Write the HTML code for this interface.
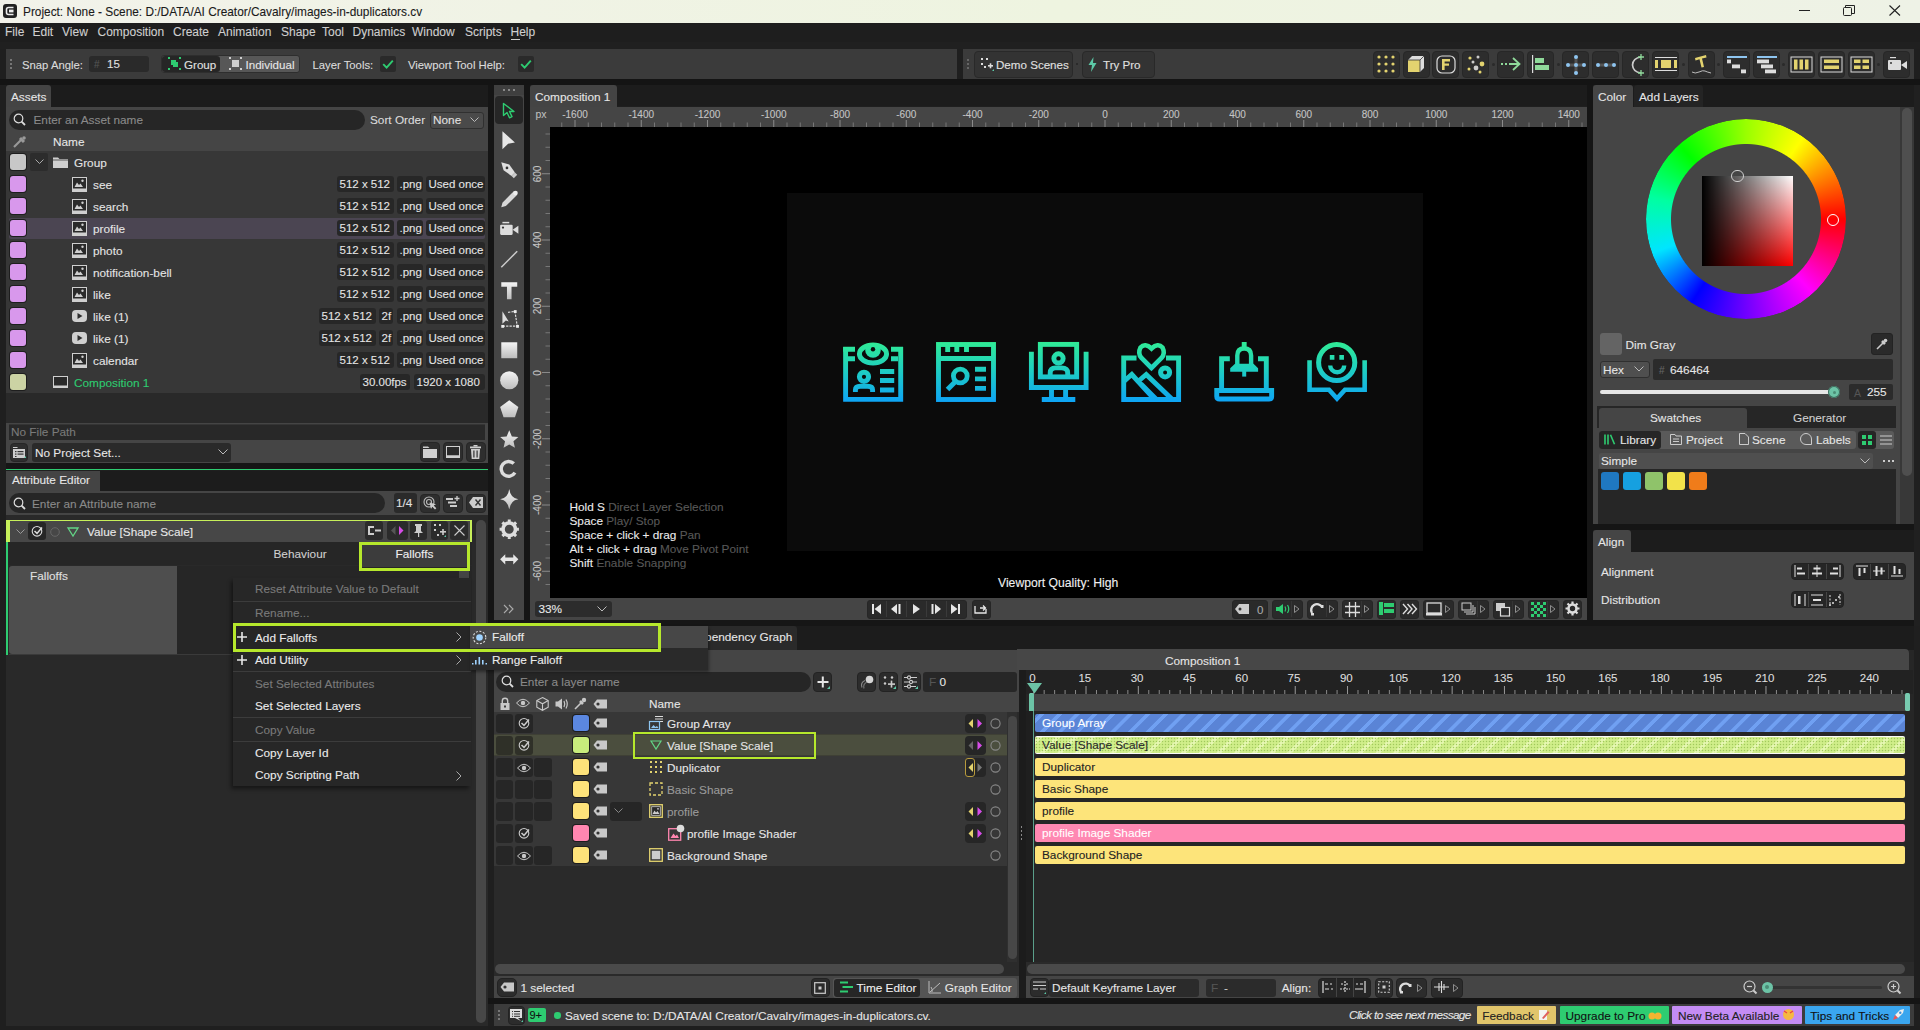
<!DOCTYPE html>
<html><head><meta charset="utf-8">
<style>
*{box-sizing:border-box;margin:0;padding:0}
html,body{width:1920px;height:1030px;overflow:hidden;background:#1f1f1f;font-family:"Liberation Sans",sans-serif;font-size:12px;color:#d8d8d8}
.a{position:absolute}
.t{position:absolute;white-space:nowrap;line-height:1;-webkit-text-stroke:0.1px currentColor}
svg.a{overflow:visible}
</style></head><body>
<div class="a" style="left:0px;top:0px;width:1920px;height:23px;background:linear-gradient(90deg,#f2f2ea 0%,#eef4e0 55%,#eef2e6 100%);"></div><svg class="a" style="left:3px;top:4px;" width="14" height="14" viewBox="0 0 14 14"><rect x="0" y="0" width="14" height="14" rx="3" fill="#222"/><path d="M10.5 3.5H5.5Q3.5 3.5 3.5 5.5V8.5Q3.5 10.5 5.5 10.5H10.5" stroke="#eee" stroke-width="1.6" fill="none"/><rect x="6" y="5.6" width="4.5" height="2.8" fill="#eee"/></svg><div class="t" style="left:23px;top:6.57px;font-size:11.85px;color:#1a1a1a;">Project: None - Scene: D:/DATA/AI Creator/Cavalry/images-in-duplicators.cv</div><div class="a" style="left:1799px;top:10px;width:11px;height:1px;background:#222;"></div><svg class="a" style="left:1843px;top:5px;" width="12" height="11" viewBox="0 0 12 11"><rect x="0.5" y="2.5" width="8" height="8" rx="1" fill="none" stroke="#222"/><path d="M2.5 2.5V0.5H11.5V8.5H8.5" fill="none" stroke="#222"/></svg><svg class="a" style="left:1889px;top:5px;" width="12" height="11" viewBox="0 0 12 11"><path d="M0.5 0.5L11 10.5M11 0.5L0.5 10.5" stroke="#222" stroke-width="1.1"/></svg><div class="a" style="left:0px;top:23px;width:1920px;height:19px;background:#1e1e1e;"></div><div class="a" style="left:0px;top:42px;width:1920px;height:7px;background:#202020;"></div><div class="t" style="left:5px;top:26.34px;font-size:12px;color:#cfcfcf;">File</div><div class="t" style="left:32.5px;top:26.34px;font-size:12px;color:#cfcfcf;">Edit</div><div class="t" style="left:62px;top:26.34px;font-size:12px;color:#cfcfcf;">View</div><div class="t" style="left:97.5px;top:26.34px;font-size:12px;color:#cfcfcf;">Composition</div><div class="t" style="left:173px;top:26.34px;font-size:12px;color:#cfcfcf;">Create</div><div class="t" style="left:218px;top:26.34px;font-size:12px;color:#cfcfcf;">Animation</div><div class="t" style="left:281px;top:26.34px;font-size:12px;color:#cfcfcf;">Shape</div><div class="t" style="left:322px;top:26.34px;font-size:12px;color:#cfcfcf;">Tool</div><div class="t" style="left:352.5px;top:26.34px;font-size:12px;color:#cfcfcf;">Dynamics</div><div class="t" style="left:412px;top:26.34px;font-size:12px;color:#cfcfcf;">Window</div><div class="t" style="left:465px;top:26.34px;font-size:12px;color:#cfcfcf;">Scripts</div><div class="t" style="left:510.5px;top:26.34px;font-size:12px;color:#cfcfcf;">Help</div><div class="a" style="left:511px;top:39px;width:9px;height:1px;background:#cfcfcf;"></div><div class="a" style="left:6px;top:49px;width:951px;height:30px;background:#3b3b3b;"></div><div class="a" style="left:10px;top:59px;width:2px;height:2px;background:#777;"></div><div class="a" style="left:10px;top:63px;width:2px;height:2px;background:#777;"></div><div class="a" style="left:10px;top:67px;width:2px;height:2px;background:#777;"></div><div class="t" style="left:22px;top:60.03px;font-size:11.3px;color:#dcdcdc;">Snap Angle:</div><div class="a" style="left:89px;top:56px;width:60px;height:16px;background:#2a2a2a;border-radius:3px"></div><div class="t" style="left:94px;top:60.13px;font-size:10px;color:#555;">#</div><div class="t" style="left:107px;top:59.37px;font-size:11.5px;color:#e0e0e0;">15</div><div class="a" style="left:161px;top:55px;width:139px;height:18px;background:#575757;border-radius:3px;border:1px solid #2e2e2e"></div><div class="a" style="left:162px;top:56px;width:58px;height:16px;background:#262626;border-radius:3px"></div><svg class="a" style="left:168px;top:57px;" width="13" height="13" viewBox="0 0 13 13"><rect x="3" y="3" width="5" height="5" fill="#2ecc71"/><rect x="5" y="5" width="5" height="5" fill="#2ecc71"/><g fill="#2ecc71"><rect x="0" y="0" width="2" height="2"/><rect x="11" y="0" width="2" height="2"/><rect x="0" y="11" width="2" height="2"/><rect x="11" y="11" width="2" height="2"/></g></svg><div class="t" style="left:184px;top:59.08px;font-size:11.6px;color:#e0e0e0;">Group</div><svg class="a" style="left:229px;top:57px;" width="13" height="13" viewBox="0 0 13 13"><rect x="3" y="3" width="7" height="7" fill="#cfcfcf"/><g fill="#cfcfcf"><rect x="0" y="0" width="2" height="2"/><rect x="11" y="0" width="2" height="2"/><rect x="0" y="11" width="2" height="2"/><rect x="11" y="11" width="2" height="2"/></g></svg><div class="t" style="left:245.5px;top:59.08px;font-size:11.6px;color:#e6e6e6;">Individual</div><div class="t" style="left:312.5px;top:60.03px;font-size:11.3px;color:#dcdcdc;">Layer Tools:</div><svg class="a" style="left:380px;top:56px;" width="16" height="16" viewBox="0 0 16 16"><rect width="16" height="16" rx="2" fill="#2a2a2a"/><path d="M3.2 8.2L6.6 11.6L12.8 4.6" stroke="#2ecc71" stroke-width="1.9" fill="none"/></svg><div class="t" style="left:408px;top:60.03px;font-size:11.3px;color:#dcdcdc;">Viewport Tool Help:</div><svg class="a" style="left:518px;top:56px;" width="16" height="16" viewBox="0 0 16 16"><rect width="16" height="16" rx="2" fill="#2a2a2a"/><path d="M3.2 8.2L6.6 11.6L12.8 4.6" stroke="#2ecc71" stroke-width="1.9" fill="none"/></svg><div class="a" style="left:963px;top:49px;width:951px;height:30px;background:#3b3b3b;"></div><div class="a" style="left:967px;top:59px;width:2px;height:2px;background:#666;"></div><div class="a" style="left:967px;top:63px;width:2px;height:2px;background:#666;"></div><div class="a" style="left:967px;top:67px;width:2px;height:2px;background:#666;"></div><div class="a" style="left:974px;top:51px;width:99px;height:27px;background:#333;border:1px solid #292929;border-radius:4px"></div><svg class="a" style="left:980px;top:57px;" width="14" height="15" viewBox="0 0 14 15"><g fill="#ddd"><rect x="1" y="1" width="2" height="2"/><rect x="6" y="1" width="2" height="2"/><rect x="1" y="6" width="2" height="2"/><rect x="8" y="8" width="5" height="1.6"/><rect x="9.7" y="6.3" width="1.6" height="5"/><rect x="4" y="9" width="2" height="2"/></g><path d="M12 14h2v-2z" fill="#5cc9a7"/></svg><div class="t" style="left:996px;top:58.78px;font-size:11.6px;color:#e0e0e0;">Demo Scenes</div><div class="a" style="left:1076px;top:63px;width:2px;height:2px;background:#2a2a2a;"></div><div class="a" style="left:1082px;top:51px;width:73px;height:27px;background:#333;border:1px solid #292929;border-radius:4px"></div><svg class="a" style="left:1088px;top:57px;" width="9" height="15" viewBox="0 0 9 15"><path d="M5.5 0L0.5 8H4L3 15L8.5 6H5Z" fill="#5cc9a7"/></svg><div class="t" style="left:1103px;top:58.78px;font-size:11.6px;color:#e0e0e0;">Try Pro</div><div class="a" style="left:1372.5px;top:51px;width:27px;height:27px;background:#2d2d2d;border:1px solid #272727;border-radius:4px"></div><div class="a" style="left:1402.5px;top:51px;width:27px;height:27px;background:#2d2d2d;border:1px solid #272727;border-radius:4px"></div><div class="a" style="left:1432px;top:51px;width:27px;height:27px;background:#2d2d2d;border:1px solid #272727;border-radius:4px"></div><div class="a" style="left:1462px;top:51px;width:27px;height:27px;background:#2d2d2d;border:1px solid #272727;border-radius:4px"></div><div class="a" style="left:1497px;top:51px;width:27px;height:27px;background:#2d2d2d;border:1px solid #272727;border-radius:4px"></div><div class="a" style="left:1527px;top:51px;width:27px;height:27px;background:#2d2d2d;border:1px solid #272727;border-radius:4px"></div><div class="a" style="left:1562px;top:51px;width:27px;height:27px;background:#2d2d2d;border:1px solid #272727;border-radius:4px"></div><div class="a" style="left:1592px;top:51px;width:27px;height:27px;background:#2d2d2d;border:1px solid #272727;border-radius:4px"></div><div class="a" style="left:1622px;top:51px;width:27px;height:27px;background:#2d2d2d;border:1px solid #272727;border-radius:4px"></div><div class="a" style="left:1652px;top:51px;width:27px;height:27px;background:#2d2d2d;border:1px solid #272727;border-radius:4px"></div><div class="a" style="left:1687.5px;top:51px;width:27px;height:27px;background:#2d2d2d;border:1px solid #272727;border-radius:4px"></div><div class="a" style="left:1722.5px;top:51px;width:27px;height:27px;background:#2d2d2d;border:1px solid #272727;border-radius:4px"></div><div class="a" style="left:1752.5px;top:51px;width:27px;height:27px;background:#2d2d2d;border:1px solid #272727;border-radius:4px"></div><div class="a" style="left:1787.5px;top:51px;width:27px;height:27px;background:#2d2d2d;border:1px solid #272727;border-radius:4px"></div><div class="a" style="left:1817.5px;top:51px;width:27px;height:27px;background:#2d2d2d;border:1px solid #272727;border-radius:4px"></div><div class="a" style="left:1847.5px;top:51px;width:27px;height:27px;background:#2d2d2d;border:1px solid #272727;border-radius:4px"></div><div class="a" style="left:1883px;top:51px;width:27px;height:27px;background:#2d2d2d;border:1px solid #272727;border-radius:4px"></div><div class="a" style="left:1492px;top:63px;width:3px;height:3px;background:#2a2a2a;border-radius:2px"></div><div class="a" style="left:1557px;top:63px;width:3px;height:3px;background:#2a2a2a;border-radius:2px"></div><div class="a" style="left:1682px;top:63px;width:3px;height:3px;background:#2a2a2a;border-radius:2px"></div><div class="a" style="left:1717px;top:63px;width:3px;height:3px;background:#2a2a2a;border-radius:2px"></div><div class="a" style="left:1782px;top:63px;width:3px;height:3px;background:#2a2a2a;border-radius:2px"></div><div class="a" style="left:1877px;top:63px;width:3px;height:3px;background:#2a2a2a;border-radius:2px"></div><svg class="a" style="left:1376px;top:53.5px;" width="20" height="20" viewBox="0 0 20 20"><circle cx="3" cy="3" r="1.6" fill="#e3d36f"/><circle cx="3" cy="10" r="1.6" fill="#e3d36f"/><circle cx="3" cy="17" r="1.6" fill="#e3d36f"/><circle cx="10" cy="3" r="1.6" fill="#e3d36f"/><circle cx="10" cy="10" r="1.6" fill="#e3d36f"/><circle cx="10" cy="17" r="1.6" fill="#e3d36f"/><circle cx="17" cy="3" r="1.6" fill="#e3d36f"/><circle cx="17" cy="10" r="1.6" fill="#e3d36f"/><circle cx="17" cy="17" r="1.6" fill="#e3d36f"/></svg><svg class="a" style="left:1406px;top:53.5px;" width="20" height="20" viewBox="0 0 20 20"><path d="M2 6L6 2H18V14L14 18Z" fill="#ddd"/><rect x="2" y="6" width="12" height="12" fill="#e3d36f"/><path d="M2 6H14V18M14 6L18 2" stroke="#333" stroke-width="0.8" fill="none"/></svg><svg class="a" style="left:1436px;top:53.5px;" width="20" height="20" viewBox="0 0 20 20"><rect x="1" y="2" width="18" height="17" rx="5" fill="none" stroke="#ddd" stroke-width="1.2"/><rect x="6" y="5" width="2.6" height="11" fill="#e3d36f"/><rect x="6" y="5" width="8" height="2.5" fill="#e3d36f"/><rect x="8" y="9.5" width="5" height="2.2" fill="#e3d36f"/></svg><svg class="a" style="left:1466px;top:53.5px;" width="20" height="20" viewBox="0 0 20 20"><circle cx="4" cy="4" r="1.6" fill="#e3d36f"/><circle cx="12" cy="3" r="1.5" fill="#ccc"/><circle cx="7" cy="8" r="1.5" fill="#ccc"/><circle cx="16" cy="10" r="2.4" fill="#e3d36f"/><circle cx="10" cy="14" r="2.4" fill="#ccc"/><circle cx="3" cy="15" r="1.5" fill="#e3d36f"/><circle cx="14" cy="18" r="1.5" fill="#e3d36f"/></svg><svg class="a" style="left:1500px;top:53.5px;" width="22" height="20" viewBox="0 0 22 20"><path d="M1 10H3M5 10H7M9 10H19" stroke="#8fd99a" stroke-width="1.8"/><path d="M13 4L19.5 10L13 16" stroke="#8fd99a" stroke-width="1.8" fill="none"/></svg><svg class="a" style="left:1531px;top:53.5px;" width="20" height="20" viewBox="0 0 20 20"><rect x="1" y="1" width="1.2" height="18" fill="#ddd"/><rect x="4" y="4" width="9" height="5" fill="#8fd99a"/><rect x="4" y="11" width="14" height="5" fill="#8fd99a"/></svg><svg class="a" style="left:1565px;top:53.5px;" width="22" height="22" viewBox="0 0 22 22"><rect x="9.5" y="3" width="3" height="16" fill="#555"/><rect x="3" y="9.5" width="16" height="3" fill="#555"/><circle cx="11" cy="3" r="2" fill="#8ec5f0"/><circle cx="11" cy="11" r="2" fill="#8ec5f0"/><circle cx="11" cy="19" r="2" fill="#8ec5f0"/><circle cx="3" cy="11" r="2" fill="#8ec5f0"/><circle cx="19" cy="11" r="2" fill="#8ec5f0"/></svg><svg class="a" style="left:1595px;top:53.5px;" width="22" height="22" viewBox="0 0 22 22"><rect x="3" y="9.5" width="16" height="3" fill="#555"/><circle cx="3" cy="11" r="2" fill="#8ec5f0"/><circle cx="11" cy="11" r="2" fill="#8ec5f0"/><circle cx="19" cy="11" r="2" fill="#8ec5f0"/></svg><svg class="a" style="left:1626px;top:53.5px;" width="20" height="22" viewBox="0 0 20 22"><path d="M15 3Q7 4 6.5 11Q7 18 15 19" stroke="#ccc" stroke-width="1.7" fill="none"/><path d="M15 0V6M12 3H18M15 16V22M12 19H18" stroke="#8fd99a" stroke-width="1.3"/></svg><svg class="a" style="left:1655px;top:54.5px;" width="22" height="18" viewBox="0 0 22 18"><rect x="0" y="2" width="22" height="1" fill="#ddd"/><rect x="0" y="15" width="22" height="1" fill="#ddd"/><rect x="0" y="5" width="3" height="8" fill="#e3d36f"/><rect x="6" y="5" width="10" height="8" fill="#e3d36f"/><rect x="19" y="5" width="3" height="8" fill="#e3d36f"/></svg><svg class="a" style="left:1691px;top:52.5px;" width="22" height="22" viewBox="0 0 22 22"><path d="M4 5L15 2L15.5 4.5L11 5.6L13 14L10.5 14.5L8.5 6.3L4.5 7.5Z" fill="#e3d36f"/><path d="M1 19Q4 21 8 19T14 18T20 20" stroke="#ccc" stroke-width="0.9" fill="none"/></svg><svg class="a" style="left:1726px;top:53.5px;" width="22" height="22" viewBox="0 0 22 22"><rect x="1" y="2" width="20" height="2" fill="#8ec5f0"/><rect x="1" y="5.5" width="4" height="3.8" fill="#ddd"/><rect x="6" y="10.5" width="8" height="3.8" fill="#ddd"/><rect x="15" y="15.5" width="5" height="3.8" fill="#ddd"/></svg><svg class="a" style="left:1756px;top:53.5px;" width="22" height="22" viewBox="0 0 22 22"><rect x="1" y="2" width="20" height="2" fill="#8ec5f0"/><rect x="1" y="5.5" width="12" height="3.8" fill="#ddd"/><rect x="5" y="10.5" width="12" height="3.8" fill="#ddd"/><rect x="9" y="15.5" width="11" height="3.8" fill="#ddd"/></svg><svg class="a" style="left:1790px;top:53.5px;" width="22" height="20" viewBox="0 0 22 20"><rect x="1" y="3" width="21" height="15" fill="none" stroke="#ddd" stroke-width="1"/><rect x="4" y="5.5" width="3.5" height="10" fill="#e3d36f"/><rect x="9.5" y="5.5" width="3.5" height="10" fill="#e3d36f"/><rect x="15" y="5.5" width="3.5" height="10" fill="#e3d36f"/></svg><svg class="a" style="left:1820px;top:53.5px;" width="22" height="20" viewBox="0 0 22 20"><rect x="1" y="3" width="21" height="15" fill="none" stroke="#ddd" stroke-width="1"/><rect x="4" y="5.5" width="15" height="3.5" fill="#e3d36f"/><rect x="4" y="11.5" width="15" height="3.5" fill="#e3d36f"/></svg><svg class="a" style="left:1850px;top:53.5px;" width="22" height="20" viewBox="0 0 22 20"><rect x="1" y="3" width="21" height="15" fill="none" stroke="#ddd" stroke-width="1"/><rect x="4" y="5.5" width="6.5" height="3.5" fill="#e3d36f"/><rect x="12.5" y="5.5" width="6.5" height="3.5" fill="#e3d36f"/><rect x="4" y="11.5" width="6.5" height="3.5" fill="#e3d36f"/><rect x="12.5" y="11.5" width="6.5" height="3.5" fill="#e3d36f"/></svg><svg class="a" style="left:1886px;top:53.5px;" width="22" height="20" viewBox="0 0 22 20"><rect x="2" y="6" width="13" height="10" rx="1" fill="#ddd"/><path d="M15 11L21 7V15Z" fill="#ddd"/><rect x="4" y="3" width="6" height="1.2" fill="#ddd"/><circle cx="5" cy="9" r="1" fill="#333"/></svg><div class="a" style="left:0px;top:79px;width:1920px;height:6px;background:#141414;"></div>
<div class="a" style="left:6px;top:85px;width:482px;height:22px;background:#1c1c1c;"></div><div class="a" style="left:6px;top:85px;width:45px;height:22px;background:#444;border-radius:3px 3px 0 0"></div><div class="t" style="left:11px;top:91.61px;font-size:11.8px;color:#e6e6e6;">Assets</div><div class="a" style="left:6px;top:107px;width:482px;height:44px;background:#454545;"></div><div class="a" style="left:9px;top:110px;width:356px;height:20px;background:#262626;border-radius:10px"></div><svg class="a" style="left:13px;top:113px;" width="13" height="13" viewBox="0 0 13 13"><circle cx="5.5" cy="5.5" r="4.3" stroke="#ddd" stroke-width="1.2" fill="none"/><path d="M8.6 8.6L12 12" stroke="#ddd" stroke-width="1.8"/></svg><div class="t" style="left:33.5px;top:115.11px;font-size:11.8px;color:#8a8a8a;">Enter an Asset name</div><div class="t" style="left:370px;top:115.11px;font-size:11.8px;color:#dcdcdc;">Sort Order</div><div class="a" style="left:430px;top:112px;width:54px;height:17px;background:#4a4a4a;border-radius:3px;border:1px solid #303030"></div><div class="t" style="left:433px;top:115.11px;font-size:11.8px;color:#e0e0e0;">None</div><svg class="a" style="left:470px;top:117px;" width="9" height="6" viewBox="0 0 9 6"><path d="M0.5 0.5L4.5 4.5L8.5 0.5" stroke="#bbb" fill="none"/></svg><svg class="a" style="left:13px;top:136px;" width="13" height="12" viewBox="0 0 13 12"><path d="M1 11L8 4" stroke="#999" stroke-width="2.2"/><path d="M7 2L11 6" stroke="#999" stroke-width="3"/><circle cx="11" cy="2" r="1.8" fill="#999"/></svg><div class="t" style="left:53px;top:136.61px;font-size:11.8px;color:#e6e6e6;">Name</div><div class="a" style="left:6px;top:151px;width:482px;height:242px;background:#373737;"></div><div class="a" style="left:9px;top:217.5px;width:476px;height:21px;background:#4b4552;border-radius:2px"></div><div class="a" style="left:10px;top:154px;width:16px;height:16px;background:#c8c8c8;border-radius:3px;box-shadow:0 0 0 1px #1e1e1e"></div><div class="a" style="left:30px;top:153px;width:18px;height:18px;background:#2c2c2c;border-radius:2px"></div><svg class="a" style="left:35px;top:159px;" width="9" height="6" viewBox="0 0 9 6"><path d="M0.5 0.5L4.5 4.5L8.5 0.5" stroke="#aaa" fill="none"/></svg><svg class="a" style="left:53px;top:156px;" width="15" height="12" viewBox="0 0 15 12"><path d="M0 1.5H5L6.5 3H15V12H0Z" fill="#cfcfcf"/><rect x="0" y="3.6" width="15" height="0.8" fill="#3a3a3a"/></svg><div class="t" style="left:74px;top:157.61px;font-size:11.8px;color:#e4e4e4;">Group</div><div class="a" style="left:10px;top:176px;width:16px;height:16px;background:#d898ec;border-radius:3px;box-shadow:0 0 0 1px #1e1e1e"></div><svg class="a" style="left:72px;top:177px;" width="15" height="15" viewBox="0 0 15 15"><rect x="0.5" y="0.5" width="14" height="14" fill="#2a2a2a" stroke="#cfcfcf"/><rect x="0" y="11.5" width="15" height="3.5" fill="#cfcfcf"/><path d="M2.5 10L5 5.5L7 8L8.5 6.5L11 10Z" fill="#cfcfcf"/><circle cx="10.5" cy="3.7" r="1.2" fill="#cfcfcf"/></svg><div class="t" style="left:93px;top:179.61px;font-size:11.8px;color:#e4e4e4;">see</div><div class="a" style="left:337px;top:176px;width:57px;height:16px;background:#272727;border-radius:3px"></div><div class="t" style="left:339.5px;top:178.87px;font-size:11.5px;color:#e4e4e4;">512 x 512</div><div class="a" style="left:397px;top:176px;width:26px;height:16px;background:#272727;border-radius:3px"></div><div class="t" style="left:399.5px;top:178.87px;font-size:11.5px;color:#e4e4e4;">.png</div><div class="a" style="left:426px;top:176px;width:59px;height:16px;background:#272727;border-radius:3px"></div><div class="t" style="left:428.5px;top:178.87px;font-size:11.5px;color:#e4e4e4;">Used once</div><div class="a" style="left:10px;top:198px;width:16px;height:16px;background:#d898ec;border-radius:3px;box-shadow:0 0 0 1px #1e1e1e"></div><svg class="a" style="left:72px;top:199px;" width="15" height="15" viewBox="0 0 15 15"><rect x="0.5" y="0.5" width="14" height="14" fill="#2a2a2a" stroke="#cfcfcf"/><rect x="0" y="11.5" width="15" height="3.5" fill="#cfcfcf"/><path d="M2.5 10L5 5.5L7 8L8.5 6.5L11 10Z" fill="#cfcfcf"/><circle cx="10.5" cy="3.7" r="1.2" fill="#cfcfcf"/></svg><div class="t" style="left:93px;top:201.61px;font-size:11.8px;color:#e4e4e4;">search</div><div class="a" style="left:337px;top:198px;width:57px;height:16px;background:#272727;border-radius:3px"></div><div class="t" style="left:339.5px;top:200.87px;font-size:11.5px;color:#e4e4e4;">512 x 512</div><div class="a" style="left:397px;top:198px;width:26px;height:16px;background:#272727;border-radius:3px"></div><div class="t" style="left:399.5px;top:200.87px;font-size:11.5px;color:#e4e4e4;">.png</div><div class="a" style="left:426px;top:198px;width:59px;height:16px;background:#272727;border-radius:3px"></div><div class="t" style="left:428.5px;top:200.87px;font-size:11.5px;color:#e4e4e4;">Used once</div><div class="a" style="left:10px;top:220px;width:16px;height:16px;background:#d898ec;border-radius:3px;box-shadow:0 0 0 1px #1e1e1e"></div><svg class="a" style="left:72px;top:221px;" width="15" height="15" viewBox="0 0 15 15"><rect x="0.5" y="0.5" width="14" height="14" fill="#2a2a2a" stroke="#cfcfcf"/><rect x="0" y="11.5" width="15" height="3.5" fill="#cfcfcf"/><path d="M2.5 10L5 5.5L7 8L8.5 6.5L11 10Z" fill="#cfcfcf"/><circle cx="10.5" cy="3.7" r="1.2" fill="#cfcfcf"/></svg><div class="t" style="left:93px;top:223.61px;font-size:11.8px;color:#e4e4e4;">profile</div><div class="a" style="left:337px;top:220px;width:57px;height:16px;background:#272727;border-radius:3px"></div><div class="t" style="left:339.5px;top:222.87px;font-size:11.5px;color:#e4e4e4;">512 x 512</div><div class="a" style="left:397px;top:220px;width:26px;height:16px;background:#272727;border-radius:3px"></div><div class="t" style="left:399.5px;top:222.87px;font-size:11.5px;color:#e4e4e4;">.png</div><div class="a" style="left:426px;top:220px;width:59px;height:16px;background:#272727;border-radius:3px"></div><div class="t" style="left:428.5px;top:222.87px;font-size:11.5px;color:#e4e4e4;">Used once</div><div class="a" style="left:10px;top:242px;width:16px;height:16px;background:#d898ec;border-radius:3px;box-shadow:0 0 0 1px #1e1e1e"></div><svg class="a" style="left:72px;top:243px;" width="15" height="15" viewBox="0 0 15 15"><rect x="0.5" y="0.5" width="14" height="14" fill="#2a2a2a" stroke="#cfcfcf"/><rect x="0" y="11.5" width="15" height="3.5" fill="#cfcfcf"/><path d="M2.5 10L5 5.5L7 8L8.5 6.5L11 10Z" fill="#cfcfcf"/><circle cx="10.5" cy="3.7" r="1.2" fill="#cfcfcf"/></svg><div class="t" style="left:93px;top:245.61px;font-size:11.8px;color:#e4e4e4;">photo</div><div class="a" style="left:337px;top:242px;width:57px;height:16px;background:#272727;border-radius:3px"></div><div class="t" style="left:339.5px;top:244.87px;font-size:11.5px;color:#e4e4e4;">512 x 512</div><div class="a" style="left:397px;top:242px;width:26px;height:16px;background:#272727;border-radius:3px"></div><div class="t" style="left:399.5px;top:244.87px;font-size:11.5px;color:#e4e4e4;">.png</div><div class="a" style="left:426px;top:242px;width:59px;height:16px;background:#272727;border-radius:3px"></div><div class="t" style="left:428.5px;top:244.87px;font-size:11.5px;color:#e4e4e4;">Used once</div><div class="a" style="left:10px;top:264px;width:16px;height:16px;background:#d898ec;border-radius:3px;box-shadow:0 0 0 1px #1e1e1e"></div><svg class="a" style="left:72px;top:265px;" width="15" height="15" viewBox="0 0 15 15"><rect x="0.5" y="0.5" width="14" height="14" fill="#2a2a2a" stroke="#cfcfcf"/><rect x="0" y="11.5" width="15" height="3.5" fill="#cfcfcf"/><path d="M2.5 10L5 5.5L7 8L8.5 6.5L11 10Z" fill="#cfcfcf"/><circle cx="10.5" cy="3.7" r="1.2" fill="#cfcfcf"/></svg><div class="t" style="left:93px;top:267.61px;font-size:11.8px;color:#e4e4e4;">notification-bell</div><div class="a" style="left:337px;top:264px;width:57px;height:16px;background:#272727;border-radius:3px"></div><div class="t" style="left:339.5px;top:266.87px;font-size:11.5px;color:#e4e4e4;">512 x 512</div><div class="a" style="left:397px;top:264px;width:26px;height:16px;background:#272727;border-radius:3px"></div><div class="t" style="left:399.5px;top:266.87px;font-size:11.5px;color:#e4e4e4;">.png</div><div class="a" style="left:426px;top:264px;width:59px;height:16px;background:#272727;border-radius:3px"></div><div class="t" style="left:428.5px;top:266.87px;font-size:11.5px;color:#e4e4e4;">Used once</div><div class="a" style="left:10px;top:286px;width:16px;height:16px;background:#d898ec;border-radius:3px;box-shadow:0 0 0 1px #1e1e1e"></div><svg class="a" style="left:72px;top:287px;" width="15" height="15" viewBox="0 0 15 15"><rect x="0.5" y="0.5" width="14" height="14" fill="#2a2a2a" stroke="#cfcfcf"/><rect x="0" y="11.5" width="15" height="3.5" fill="#cfcfcf"/><path d="M2.5 10L5 5.5L7 8L8.5 6.5L11 10Z" fill="#cfcfcf"/><circle cx="10.5" cy="3.7" r="1.2" fill="#cfcfcf"/></svg><div class="t" style="left:93px;top:289.61px;font-size:11.8px;color:#e4e4e4;">like</div><div class="a" style="left:337px;top:286px;width:57px;height:16px;background:#272727;border-radius:3px"></div><div class="t" style="left:339.5px;top:288.87px;font-size:11.5px;color:#e4e4e4;">512 x 512</div><div class="a" style="left:397px;top:286px;width:26px;height:16px;background:#272727;border-radius:3px"></div><div class="t" style="left:399.5px;top:288.87px;font-size:11.5px;color:#e4e4e4;">.png</div><div class="a" style="left:426px;top:286px;width:59px;height:16px;background:#272727;border-radius:3px"></div><div class="t" style="left:428.5px;top:288.87px;font-size:11.5px;color:#e4e4e4;">Used once</div><div class="a" style="left:10px;top:308px;width:16px;height:16px;background:#d898ec;border-radius:3px;box-shadow:0 0 0 1px #1e1e1e"></div><svg class="a" style="left:72px;top:309px;" width="15" height="14" viewBox="0 0 15 14"><rect x="0" y="1" width="15" height="12" rx="4" fill="#cfcfcf"/><path d="M5.5 4L10.5 7L5.5 10Z" fill="#2e2e2e"/></svg><div class="t" style="left:93px;top:311.61px;font-size:11.8px;color:#e4e4e4;">like (1)</div><div class="a" style="left:319px;top:308px;width:56.5px;height:16px;background:#272727;border-radius:3px"></div><div class="t" style="left:321.5px;top:310.87px;font-size:11.5px;color:#e4e4e4;">512 x 512</div><div class="a" style="left:379px;top:308px;width:14px;height:16px;background:#272727;border-radius:3px"></div><div class="t" style="left:381.5px;top:310.87px;font-size:11.5px;color:#e4e4e4;">2f</div><div class="a" style="left:397px;top:308px;width:26px;height:16px;background:#272727;border-radius:3px"></div><div class="t" style="left:399.5px;top:310.87px;font-size:11.5px;color:#e4e4e4;">.png</div><div class="a" style="left:426px;top:308px;width:59px;height:16px;background:#272727;border-radius:3px"></div><div class="t" style="left:428.5px;top:310.87px;font-size:11.5px;color:#e4e4e4;">Used once</div><div class="a" style="left:10px;top:330px;width:16px;height:16px;background:#d898ec;border-radius:3px;box-shadow:0 0 0 1px #1e1e1e"></div><svg class="a" style="left:72px;top:331px;" width="15" height="14" viewBox="0 0 15 14"><rect x="0" y="1" width="15" height="12" rx="4" fill="#cfcfcf"/><path d="M5.5 4L10.5 7L5.5 10Z" fill="#2e2e2e"/></svg><div class="t" style="left:93px;top:333.61px;font-size:11.8px;color:#e4e4e4;">like (1)</div><div class="a" style="left:319px;top:330px;width:56.5px;height:16px;background:#272727;border-radius:3px"></div><div class="t" style="left:321.5px;top:332.87px;font-size:11.5px;color:#e4e4e4;">512 x 512</div><div class="a" style="left:379px;top:330px;width:14px;height:16px;background:#272727;border-radius:3px"></div><div class="t" style="left:381.5px;top:332.87px;font-size:11.5px;color:#e4e4e4;">2f</div><div class="a" style="left:397px;top:330px;width:26px;height:16px;background:#272727;border-radius:3px"></div><div class="t" style="left:399.5px;top:332.87px;font-size:11.5px;color:#e4e4e4;">.png</div><div class="a" style="left:426px;top:330px;width:59px;height:16px;background:#272727;border-radius:3px"></div><div class="t" style="left:428.5px;top:332.87px;font-size:11.5px;color:#e4e4e4;">Used once</div><div class="a" style="left:10px;top:352px;width:16px;height:16px;background:#d898ec;border-radius:3px;box-shadow:0 0 0 1px #1e1e1e"></div><svg class="a" style="left:72px;top:353px;" width="15" height="15" viewBox="0 0 15 15"><rect x="0.5" y="0.5" width="14" height="14" fill="#2a2a2a" stroke="#cfcfcf"/><rect x="0" y="11.5" width="15" height="3.5" fill="#cfcfcf"/><path d="M2.5 10L5 5.5L7 8L8.5 6.5L11 10Z" fill="#cfcfcf"/><circle cx="10.5" cy="3.7" r="1.2" fill="#cfcfcf"/></svg><div class="t" style="left:93px;top:355.61px;font-size:11.8px;color:#e4e4e4;">calendar</div><div class="a" style="left:337px;top:352px;width:57px;height:16px;background:#272727;border-radius:3px"></div><div class="t" style="left:339.5px;top:354.87px;font-size:11.5px;color:#e4e4e4;">512 x 512</div><div class="a" style="left:397px;top:352px;width:26px;height:16px;background:#272727;border-radius:3px"></div><div class="t" style="left:399.5px;top:354.87px;font-size:11.5px;color:#e4e4e4;">.png</div><div class="a" style="left:426px;top:352px;width:59px;height:16px;background:#272727;border-radius:3px"></div><div class="t" style="left:428.5px;top:354.87px;font-size:11.5px;color:#e4e4e4;">Used once</div><div class="a" style="left:10px;top:374px;width:16px;height:16px;background:#ccd3a4;border-radius:3px;box-shadow:0 0 0 1px #1e1e1e"></div><svg class="a" style="left:53px;top:376px;" width="15" height="13" viewBox="0 0 15 13"><rect x="0.5" y="0.5" width="14" height="10" fill="#2a2a2a" stroke="#cfcfcf"/><rect x="0" y="9.5" width="15" height="2.5" fill="#cfcfcf"/></svg><div class="t" style="left:74px;top:377.61px;font-size:11.8px;color:#2ecc71;">Composition 1</div><div class="a" style="left:360px;top:374px;width:50px;height:16px;background:#272727;border-radius:3px"></div><div class="t" style="left:362.5px;top:376.87px;font-size:11.5px;color:#e4e4e4;">30.00fps</div><div class="a" style="left:414px;top:374px;width:71px;height:16px;background:#272727;border-radius:3px"></div><div class="t" style="left:416.5px;top:376.87px;font-size:11.5px;color:#e4e4e4;">1920 x 1080</div><div class="a" style="left:6px;top:393px;width:482px;height:30px;background:#292929;"></div><div class="a" style="left:6px;top:423px;width:482px;height:40px;background:#454545;"></div><div class="a" style="left:9px;top:423.5px;width:476px;height:16.5px;background:#282828;border-top:1px solid #353535"></div><div class="t" style="left:11px;top:427.11px;font-size:11.8px;color:#7a7a7a;">No File Path</div><div class="a" style="left:10px;top:443px;width:18px;height:19px;background:#2e2e2e;border-radius:4px;border:1px solid #262626"></div><svg class="a" style="left:12px;top:446px;" width="14" height="13" viewBox="0 0 14 13"><path d="M1 1H5L6 2H1Z" fill="#ccc"/><rect x="1" y="3" width="12" height="9" fill="#ccc"/><g fill="#333"><rect x="3" y="5" width="1.5" height="1.2"/><rect x="5.5" y="5" width="6" height="1.2"/><rect x="3" y="7.5" width="1.5" height="1.2"/><rect x="5.5" y="7.5" width="6" height="1.2"/><rect x="3" y="10" width="1.5" height="1"/></g><path d="M12 12h2v-2z" fill="#5cc9a7"/></svg><div class="a" style="left:32px;top:443px;width:199px;height:19px;background:#2a2a2a;border-radius:3px"></div><div class="t" style="left:35px;top:447.61px;font-size:11.8px;color:#e6e6e6;">No Project Set...</div><svg class="a" style="left:218px;top:449px;" width="10" height="6" viewBox="0 0 10 6"><path d="M0.5 0.5L5 5L9.5 0.5" stroke="#bbb" fill="none"/></svg><div class="a" style="left:420px;top:442px;width:19.5px;height:20px;background:#2e2e2e;border-radius:4px;border:1px solid #262626"></div><div class="a" style="left:443px;top:442px;width:19.5px;height:20px;background:#2e2e2e;border-radius:4px;border:1px solid #262626"></div><div class="a" style="left:466px;top:442px;width:19.5px;height:20px;background:#2e2e2e;border-radius:4px;border:1px solid #262626"></div><svg class="a" style="left:423px;top:446px;" width="14" height="12" viewBox="0 0 14 12"><path d="M0 0.5H5L6.5 2H0Z" fill="#cfcfcf"/><rect x="0" y="3" width="14" height="9" fill="#cfcfcf"/></svg><svg class="a" style="left:446px;top:446px;" width="14" height="12" viewBox="0 0 14 12"><rect x="0.5" y="0.5" width="13" height="9.5" fill="#2a2a2a" stroke="#cfcfcf"/><rect x="0" y="9.5" width="14" height="2.5" fill="#cfcfcf"/></svg><svg class="a" style="left:470px;top:445px;" width="11" height="14" viewBox="0 0 11 14"><rect x="0" y="1.5" width="11" height="1.8" fill="#cfcfcf"/><rect x="3.5" y="0" width="4" height="1.5" fill="#cfcfcf"/><path d="M1 4H10L9.3 14H1.7Z" fill="#cfcfcf"/><rect x="3.3" y="5.5" width="1.2" height="7" fill="#333"/><rect x="6.5" y="5.5" width="1.2" height="7" fill="#333"/></svg><div class="a" style="left:6px;top:463px;width:482px;height:6px;background:#161616;"></div><div class="a" style="left:6px;top:469px;width:482px;height:1.3px;background:#2ecc71;"></div><div class="a" style="left:6px;top:470.5px;width:482px;height:20.5px;background:#1c1c1c;"></div><div class="a" style="left:6px;top:470.5px;width:94px;height:20.5px;background:#444;"></div><div class="t" style="left:12px;top:474.61px;font-size:11.8px;color:#e6e6e6;">Attribute Editor</div><div class="a" style="left:6px;top:491px;width:482px;height:24px;background:#454545;"></div><div class="a" style="left:9px;top:493px;width:376px;height:20px;background:#262626;border-radius:10px"></div><svg class="a" style="left:13px;top:497px;" width="13" height="13" viewBox="0 0 13 13"><circle cx="5.5" cy="5.5" r="4.3" stroke="#ddd" stroke-width="1.2" fill="none"/><path d="M8.6 8.6L12 12" stroke="#ddd" stroke-width="1.8"/></svg><div class="t" style="left:32px;top:498.61px;font-size:11.8px;color:#8a8a8a;">Enter an Attribute name</div><div class="a" style="left:394px;top:493px;width:22.5px;height:19.5px;background:#2a2a2a;border-radius:3px"></div><div class="t" style="left:396px;top:498.11px;font-size:11.8px;color:#e0e0e0;">1/4</div><div class="a" style="left:420px;top:493.5px;width:19.5px;height:19px;background:#2e2e2e;border-radius:4px;border:1px solid #262626"></div><div class="a" style="left:443px;top:493.5px;width:19.5px;height:19px;background:#2e2e2e;border-radius:4px;border:1px solid #262626"></div><div class="a" style="left:466px;top:493.5px;width:19.5px;height:19px;background:#2e2e2e;border-radius:4px;border:1px solid #262626"></div><svg class="a" style="left:423px;top:496px;" width="14" height="14" viewBox="0 0 14 14"><circle cx="6" cy="6" r="5" stroke="#bbb" fill="none" stroke-width="1.1"/><circle cx="6" cy="6" r="2.5" stroke="#bbb" fill="none" stroke-width="1.1"/><path d="M6.5 6.5L8 13L9.3 10.7L12 13.5L13.3 12.2L10.7 9.5L13 8.2Z" fill="#ccc"/></svg><svg class="a" style="left:446px;top:496px;" width="14" height="12" viewBox="0 0 14 12"><rect x="0" y="2" width="7" height="2" fill="#ccc"/><rect x="2" y="5.5" width="8" height="2" fill="#ccc"/><rect x="4" y="9" width="7" height="2" fill="#ccc"/><path d="M11 0V5M8.5 2.5H13.5" stroke="#ccc" stroke-width="1.3"/></svg><svg class="a" style="left:469px;top:497px;" width="14" height="11" viewBox="0 0 14 11"><path d="M4 0H14V11H4L0 5.5Z" fill="#ccc"/><path d="M6.5 2.5L11.5 8.5M11.5 2.5L6.5 8.5" stroke="#333" stroke-width="1.4"/></svg><div class="a" style="left:6px;top:515px;width:482px;height:511px;background:#292929;"></div><div class="a" style="left:476px;top:520px;width:10px;height:503px;background:#474747;border-radius:5px"></div><div class="a" style="left:6px;top:520px;width:466px;height:22px;background:#474747;"></div><div class="a" style="left:6px;top:519.5px;width:466px;height:1.5px;background:#c7ef5a;"></div><div class="a" style="left:6px;top:520px;width:4px;height:22px;background:#c7ef5a;"></div><div class="a" style="left:469.5px;top:520px;width:2.5px;height:22px;background:#c7ef5a;"></div><svg class="a" style="left:16px;top:529px;" width="9" height="6" viewBox="0 0 9 6"><path d="M0.5 0.5L4.5 4.5L8.5 0.5" stroke="#999" fill="none"/></svg><div class="a" style="left:28px;top:522px;width:18px;height:18px;background:#262626;border-radius:3px"></div><svg class="a" style="left:31px;top:525px;" width="12" height="12" viewBox="0 0 12 12"><circle cx="6" cy="6.3" r="4.8" stroke="#ddd" fill="none" stroke-width="1.1"/><path d="M3.5 6L6 8.4L11 2.5" stroke="#ddd" stroke-width="1.5" fill="none"/></svg><svg class="a" style="left:50px;top:527px;" width="10" height="10" viewBox="0 0 10 10"><circle cx="5" cy="5" r="4.3" stroke="#666" fill="none" stroke-width="1"/></svg><svg class="a" style="left:67px;top:527px;" width="12" height="10" viewBox="0 0 12 10"><path d="M1 1H11L6 9Z" stroke="#63d486" fill="none" stroke-width="1.3"/></svg><div class="t" style="left:87px;top:527.11px;font-size:11.8px;color:#e8e8e8;">Value [Shape Scale]</div><div class="a" style="left:365px;top:521px;width:18px;height:19px;background:#2b2b2b;border-radius:3px"></div><div class="a" style="left:387px;top:521px;width:21px;height:19px;background:#2b2b2b;border-radius:3px"></div><div class="a" style="left:410px;top:521px;width:17px;height:19px;background:#2b2b2b;border-radius:3px"></div><div class="a" style="left:431px;top:521px;width:17px;height:19px;background:#2b2b2b;border-radius:3px"></div><div class="a" style="left:450px;top:521px;width:18px;height:19px;background:#2b2b2b;border-radius:3px"></div><svg class="a" style="left:368px;top:525px;" width="13" height="11" viewBox="0 0 13 11"><rect x="0" y="1" width="6" height="2" fill="#ccc"/><rect x="0" y="8" width="6" height="2" fill="#ccc"/><rect x="0" y="1" width="2" height="9" fill="#ccc"/><rect x="7" y="4.5" width="6" height="2" fill="#ccc"/></svg><svg class="a" style="left:390px;top:526px;" width="15" height="9" viewBox="0 0 15 9"><path d="M5.5 0V9L1 4.5Z" fill="#555"/><path d="M9 0V9L13.5 4.5Z" fill="#d64de8"/></svg><svg class="a" style="left:413px;top:524px;" width="11" height="13" viewBox="0 0 11 13"><rect x="2" y="0" width="7" height="2" fill="#ccc"/><path d="M3 2H8V7L10 9H1L3 7Z" fill="#ccc"/><rect x="5" y="9" width="1.2" height="4" fill="#ccc"/></svg><svg class="a" style="left:434px;top:524px;" width="12" height="13" viewBox="0 0 12 13"><g fill="#ccc"><rect x="0" y="0" width="2" height="2"/><rect x="5" y="0" width="2" height="2"/><rect x="0" y="5" width="2" height="2"/><rect x="3" y="10" width="2" height="2"/><rect x="6" y="7" width="6" height="1.6"/><rect x="8.2" y="5" width="1.6" height="6"/></g><path d="M10 13h2v-2z" fill="#5cc9a7"/></svg><svg class="a" style="left:454px;top:525px;" width="11" height="11" viewBox="0 0 11 11"><path d="M0.5 0.5L10.5 10.5M10.5 0.5L0.5 10.5" stroke="#ccc" stroke-width="1.1"/></svg><div class="a" style="left:6px;top:542px;width:466px;height:23px;background:#262626;"></div><div class="a" style="left:6px;top:542px;width:1.5px;height:113px;background:#2ecc71;"></div><div class="t" style="left:273.5px;top:548.61px;font-size:11.8px;color:#cfcfcf;">Behaviour</div><div class="a" style="left:9px;top:565.5px;width:463px;height:89px;background:#262626;"></div><div class="a" style="left:9px;top:566px;width:168px;height:88px;background:#4e4e4e;border-radius:3px 0 0 3px"></div><div class="a" style="left:177px;top:566px;width:294px;height:87px;background:#262626;border-radius:4px"></div><div class="t" style="left:30px;top:571.11px;font-size:11.8px;color:#e0e0e0;">Falloffs</div><div class="a" style="left:459px;top:570px;width:10px;height:8px;background:#444;"></div><div class="a" style="left:9px;top:653.5px;width:463px;height:1.5px;background:#3a3a3a;"></div><div class="a" style="left:361.5px;top:545px;width:105px;height:22px;background:#3c3c3c;"></div><div class="t" style="left:395.5px;top:548.61px;font-size:11.8px;color:#f0f0f0;">Falloffs</div><div class="a" style="left:358.5px;top:542px;width:111px;height:28.5px;background:none;border:3px solid #b6e82c"></div>
<div class="a" style="left:488px;top:85px;width:6px;height:541px;background:#151515;"></div><div class="a" style="left:494px;top:85px;width:30px;height:535px;background:#454545;"></div><div class="a" style="left:494px;top:85px;width:30px;height:10px;background:#3f3f3f;"></div><div class="a" style="left:503px;top:89px;width:2px;height:2px;background:#888;"></div><div class="a" style="left:508px;top:89px;width:2px;height:2px;background:#888;"></div><div class="a" style="left:513px;top:89px;width:2px;height:2px;background:#888;"></div><div class="a" style="left:524px;top:85px;width:6px;height:541px;background:#151515;"></div><div class="a" style="left:495px;top:96px;width:28px;height:28px;background:#262626;border-radius:4px"></div><svg class="a" style="left:502px;top:102px;" width="14" height="17" viewBox="0 0 14 17"><path d="M1.5 1.5V13.5L5 10.5L7.5 15.8L10 14.6L7.5 9.5H12Z" fill="none" stroke="#2ecc71" stroke-width="1.4" stroke-linejoin="round"/></svg><svg class="a" style="left:0px;top:0px;" width="1" height="1" viewBox="0 0 1 1"><defs><linearGradient id="tg" x1="0" y1="0" x2="0" y2="1"><stop offset="0" stop-color="#f4f4f4"/><stop offset="1" stop-color="#bdbdbd"/></linearGradient></defs></svg><svg class="a" style="left:499px;top:130px;overflow:visible" width="20.5" height="20.5" viewBox="0 0 18 18"><path d="M3 1V17L8 12L14 11Z" fill="#e6e6e6"/></svg><svg class="a" style="left:499px;top:160px;overflow:visible" width="20.5" height="20.5" viewBox="0 0 18 18"><path d="M2 2L9 4L14 11L11 14L4 9Z" fill="#dedede"/><circle cx="7" cy="7" r="1.2" fill="#333"/><path d="M11 14L14 11L16 13L13 16Z" fill="#ccc"/></svg><svg class="a" style="left:499px;top:189px;overflow:visible" width="20.5" height="20.5" viewBox="0 0 18 18"><path d="M2 16L3 12L13 2L16 5L6 15Z" fill="#d8d8d8"/><circle cx="14.5" cy="3.5" r="2" fill="#eee"/></svg><svg class="a" style="left:499px;top:219px;overflow:visible" width="20.5" height="20.5" viewBox="0 0 18 18"><rect x="1" y="5" width="11" height="9" rx="1" fill="#ddd"/><path d="M12 9.5L17 6V13Z" fill="#ddd"/><rect x="3" y="2.5" width="6" height="1.3" fill="#ddd"/><circle cx="3.5" cy="7.5" r="1" fill="#333"/></svg><svg class="a" style="left:499px;top:249px;overflow:visible" width="20.5" height="20.5" viewBox="0 0 18 18"><path d="M2 16L16 2" stroke="#ccc" stroke-width="1.3"/></svg><svg class="a" style="left:499px;top:280px;overflow:visible" width="20.5" height="20.5" viewBox="0 0 18 18"><path d="M2 2H16V6H11V17H7V6H2Z" fill="url(#tg)"/></svg><svg class="a" style="left:499px;top:309px;overflow:visible" width="20.5" height="20.5" viewBox="0 0 18 18"><path d="M3 2L3 13L6 10L8.5 11Z" fill="#ddd"/><path d="M8 3L14 2L16 15L3 15" stroke="#ddd" stroke-width="1" fill="none" stroke-dasharray="2 1"/><g fill="#eee"><rect x="13" y="1" width="2.5" height="2.5"/><rect x="15" y="14" width="2.5" height="2.5"/><rect x="2" y="14" width="2.5" height="2.5"/></g></svg><svg class="a" style="left:499px;top:340px;overflow:visible" width="20.5" height="20.5" viewBox="0 0 18 18"><rect x="2" y="2" width="14" height="14" fill="url(#tg)"/></svg><svg class="a" style="left:499px;top:370px;overflow:visible" width="20.5" height="20.5" viewBox="0 0 18 18"><circle cx="9" cy="9" r="8" fill="url(#tg)"/></svg><svg class="a" style="left:499px;top:399px;overflow:visible" width="20.5" height="20.5" viewBox="0 0 18 18"><path d="M9 1L17 7L14 16H4L1 7Z" fill="url(#tg)"/></svg><svg class="a" style="left:499px;top:429px;overflow:visible" width="20.5" height="20.5" viewBox="0 0 18 18"><path d="M9 1L11.3 6.5L17 7L12.7 10.8L14 16.5L9 13.5L4 16.5L5.3 10.8L1 7L6.7 6.5Z" fill="url(#tg)"/></svg><svg class="a" style="left:499px;top:459px;overflow:visible" width="20.5" height="20.5" viewBox="0 0 18 18"><path d="M14 12A6.5 6.5 0 1 1 13 4" stroke="#ddd" stroke-width="3" fill="none"/></svg><svg class="a" style="left:499px;top:489px;overflow:visible" width="20.5" height="20.5" viewBox="0 0 18 18"><path d="M9 0Q10 8 17 9Q10 10 9 18Q8 10 1 9Q8 8 9 0Z" fill="url(#tg)"/></svg><svg class="a" style="left:499px;top:519px;overflow:visible" width="20.5" height="20.5" viewBox="0 0 18 18"><circle cx="9" cy="9" r="5.5" fill="none" stroke="#ddd" stroke-width="3.2"/><g stroke="#ddd" stroke-width="2.6"><path d="M9 0.5V4M9 14V17.5M0.5 9H4M14 9H17.5M3 3L5.4 5.4M12.6 12.6L15 15M15 3L12.6 5.4M5.4 12.6L3 15"/></g></svg><svg class="a" style="left:499px;top:549px;overflow:visible" width="20.5" height="20.5" viewBox="0 0 18 18"><path d="M1 9L5.5 4.5V7.5H12.5V4.5L17 9L12.5 13.5V10.5H5.5V13.5Z" fill="#e6e6e6"/></svg><svg class="a" style="left:503px;top:604px;" width="12" height="10" viewBox="0 0 12 10"><path d="M1 1L5 5L1 9M6 1L10 5L6 9" stroke="#aaa" fill="none" stroke-width="1.1"/></svg><div class="a" style="left:530px;top:85px;width:1057px;height:21px;background:#1c1c1c;"></div><div class="a" style="left:530px;top:85px;width:87px;height:22px;background:#444;border-radius:3px 3px 0 0"></div><div class="t" style="left:535px;top:91.61px;font-size:11.8px;color:#e6e6e6;">Composition 1</div><div class="a" style="left:530px;top:106.5px;width:1057px;height:513.5px;background:#454545;"></div><div class="a" style="left:550px;top:127px;width:1037px;height:471px;background:#000;"></div><div class="t" style="left:535.5px;top:108.71px;font-size:10.5px;color:#bdbdbd;">px</div><div class="t" style="left:535.00px;top:109.50px;width:80px;text-align:center;font-size:10px;color:#c4c4c4">-1600</div><div class="t" style="left:601.25px;top:109.50px;width:80px;text-align:center;font-size:10px;color:#c4c4c4">-1400</div><div class="t" style="left:667.50px;top:109.50px;width:80px;text-align:center;font-size:10px;color:#c4c4c4">-1200</div><div class="t" style="left:733.75px;top:109.50px;width:80px;text-align:center;font-size:10px;color:#c4c4c4">-1000</div><div class="t" style="left:800.00px;top:109.50px;width:80px;text-align:center;font-size:10px;color:#c4c4c4">-800</div><div class="t" style="left:866.25px;top:109.50px;width:80px;text-align:center;font-size:10px;color:#c4c4c4">-600</div><div class="t" style="left:932.50px;top:109.50px;width:80px;text-align:center;font-size:10px;color:#c4c4c4">-400</div><div class="t" style="left:998.75px;top:109.50px;width:80px;text-align:center;font-size:10px;color:#c4c4c4">-200</div><div class="t" style="left:1065.00px;top:109.50px;width:80px;text-align:center;font-size:10px;color:#c4c4c4">0</div><div class="t" style="left:1131.25px;top:109.50px;width:80px;text-align:center;font-size:10px;color:#c4c4c4">200</div><div class="t" style="left:1197.50px;top:109.50px;width:80px;text-align:center;font-size:10px;color:#c4c4c4">400</div><div class="t" style="left:1263.75px;top:109.50px;width:80px;text-align:center;font-size:10px;color:#c4c4c4">600</div><div class="t" style="left:1330.00px;top:109.50px;width:80px;text-align:center;font-size:10px;color:#c4c4c4">800</div><div class="t" style="left:1396.25px;top:109.50px;width:80px;text-align:center;font-size:10px;color:#c4c4c4">1000</div><div class="t" style="left:1462.50px;top:109.50px;width:80px;text-align:center;font-size:10px;color:#c4c4c4">1200</div><div class="t" style="left:1528.75px;top:109.50px;width:80px;text-align:center;font-size:10px;color:#c4c4c4">1400</div><svg class="a" style="left:0px;top:0px;pointer-events:none" width="1920" height="1030" viewBox="0 0 1920 1030"><rect x="561.25" y="122.5" width="1" height="4.5" fill="#777"/><rect x="574.50" y="120" width="1" height="7" fill="#8a8a8a"/><rect x="587.75" y="122.5" width="1" height="4.5" fill="#777"/><rect x="601.00" y="122.5" width="1" height="4.5" fill="#777"/><rect x="614.25" y="122.5" width="1" height="4.5" fill="#777"/><rect x="627.50" y="122.5" width="1" height="4.5" fill="#777"/><rect x="640.75" y="120" width="1" height="7" fill="#8a8a8a"/><rect x="654.00" y="122.5" width="1" height="4.5" fill="#777"/><rect x="667.25" y="122.5" width="1" height="4.5" fill="#777"/><rect x="680.50" y="122.5" width="1" height="4.5" fill="#777"/><rect x="693.75" y="122.5" width="1" height="4.5" fill="#777"/><rect x="707.00" y="120" width="1" height="7" fill="#8a8a8a"/><rect x="720.25" y="122.5" width="1" height="4.5" fill="#777"/><rect x="733.50" y="122.5" width="1" height="4.5" fill="#777"/><rect x="746.75" y="122.5" width="1" height="4.5" fill="#777"/><rect x="760.00" y="122.5" width="1" height="4.5" fill="#777"/><rect x="773.25" y="120" width="1" height="7" fill="#8a8a8a"/><rect x="786.50" y="122.5" width="1" height="4.5" fill="#777"/><rect x="799.75" y="122.5" width="1" height="4.5" fill="#777"/><rect x="813.00" y="122.5" width="1" height="4.5" fill="#777"/><rect x="826.25" y="122.5" width="1" height="4.5" fill="#777"/><rect x="839.50" y="120" width="1" height="7" fill="#8a8a8a"/><rect x="852.75" y="122.5" width="1" height="4.5" fill="#777"/><rect x="866.00" y="122.5" width="1" height="4.5" fill="#777"/><rect x="879.25" y="122.5" width="1" height="4.5" fill="#777"/><rect x="892.50" y="122.5" width="1" height="4.5" fill="#777"/><rect x="905.75" y="120" width="1" height="7" fill="#8a8a8a"/><rect x="919.00" y="122.5" width="1" height="4.5" fill="#777"/><rect x="932.25" y="122.5" width="1" height="4.5" fill="#777"/><rect x="945.50" y="122.5" width="1" height="4.5" fill="#777"/><rect x="958.75" y="122.5" width="1" height="4.5" fill="#777"/><rect x="972.00" y="120" width="1" height="7" fill="#8a8a8a"/><rect x="985.25" y="122.5" width="1" height="4.5" fill="#777"/><rect x="998.50" y="122.5" width="1" height="4.5" fill="#777"/><rect x="1011.75" y="122.5" width="1" height="4.5" fill="#777"/><rect x="1025.00" y="122.5" width="1" height="4.5" fill="#777"/><rect x="1038.25" y="120" width="1" height="7" fill="#8a8a8a"/><rect x="1051.50" y="122.5" width="1" height="4.5" fill="#777"/><rect x="1064.75" y="122.5" width="1" height="4.5" fill="#777"/><rect x="1078.00" y="122.5" width="1" height="4.5" fill="#777"/><rect x="1091.25" y="122.5" width="1" height="4.5" fill="#777"/><rect x="1104.50" y="120" width="1" height="7" fill="#8a8a8a"/><rect x="1117.75" y="122.5" width="1" height="4.5" fill="#777"/><rect x="1131.00" y="122.5" width="1" height="4.5" fill="#777"/><rect x="1144.25" y="122.5" width="1" height="4.5" fill="#777"/><rect x="1157.50" y="122.5" width="1" height="4.5" fill="#777"/><rect x="1170.75" y="120" width="1" height="7" fill="#8a8a8a"/><rect x="1184.00" y="122.5" width="1" height="4.5" fill="#777"/><rect x="1197.25" y="122.5" width="1" height="4.5" fill="#777"/><rect x="1210.50" y="122.5" width="1" height="4.5" fill="#777"/><rect x="1223.75" y="122.5" width="1" height="4.5" fill="#777"/><rect x="1237.00" y="120" width="1" height="7" fill="#8a8a8a"/><rect x="1250.25" y="122.5" width="1" height="4.5" fill="#777"/><rect x="1263.50" y="122.5" width="1" height="4.5" fill="#777"/><rect x="1276.75" y="122.5" width="1" height="4.5" fill="#777"/><rect x="1290.00" y="122.5" width="1" height="4.5" fill="#777"/><rect x="1303.25" y="120" width="1" height="7" fill="#8a8a8a"/><rect x="1316.50" y="122.5" width="1" height="4.5" fill="#777"/><rect x="1329.75" y="122.5" width="1" height="4.5" fill="#777"/><rect x="1343.00" y="122.5" width="1" height="4.5" fill="#777"/><rect x="1356.25" y="122.5" width="1" height="4.5" fill="#777"/><rect x="1369.50" y="120" width="1" height="7" fill="#8a8a8a"/><rect x="1382.75" y="122.5" width="1" height="4.5" fill="#777"/><rect x="1396.00" y="122.5" width="1" height="4.5" fill="#777"/><rect x="1409.25" y="122.5" width="1" height="4.5" fill="#777"/><rect x="1422.50" y="122.5" width="1" height="4.5" fill="#777"/><rect x="1435.75" y="120" width="1" height="7" fill="#8a8a8a"/><rect x="1449.00" y="122.5" width="1" height="4.5" fill="#777"/><rect x="1462.25" y="122.5" width="1" height="4.5" fill="#777"/><rect x="1475.50" y="122.5" width="1" height="4.5" fill="#777"/><rect x="1488.75" y="122.5" width="1" height="4.5" fill="#777"/><rect x="1502.00" y="120" width="1" height="7" fill="#8a8a8a"/><rect x="1515.25" y="122.5" width="1" height="4.5" fill="#777"/><rect x="1528.50" y="122.5" width="1" height="4.5" fill="#777"/><rect x="1541.75" y="122.5" width="1" height="4.5" fill="#777"/><rect x="1555.00" y="122.5" width="1" height="4.5" fill="#777"/><rect x="1568.25" y="120" width="1" height="7" fill="#8a8a8a"/><rect x="1581.50" y="122.5" width="1" height="4.5" fill="#777"/><rect x="542" y="570.75" width="8" height="1" fill="#8a8a8a"/><rect x="545.5" y="584.00" width="4.5" height="1" fill="#777"/><rect x="542" y="504.50" width="8" height="1" fill="#8a8a8a"/><rect x="545.5" y="517.75" width="4.5" height="1" fill="#777"/><rect x="545.5" y="531.00" width="4.5" height="1" fill="#777"/><rect x="545.5" y="544.25" width="4.5" height="1" fill="#777"/><rect x="545.5" y="557.50" width="4.5" height="1" fill="#777"/><rect x="542" y="438.25" width="8" height="1" fill="#8a8a8a"/><rect x="545.5" y="451.50" width="4.5" height="1" fill="#777"/><rect x="545.5" y="464.75" width="4.5" height="1" fill="#777"/><rect x="545.5" y="478.00" width="4.5" height="1" fill="#777"/><rect x="545.5" y="491.25" width="4.5" height="1" fill="#777"/><rect x="542" y="372.00" width="8" height="1" fill="#8a8a8a"/><rect x="545.5" y="385.25" width="4.5" height="1" fill="#777"/><rect x="545.5" y="398.50" width="4.5" height="1" fill="#777"/><rect x="545.5" y="411.75" width="4.5" height="1" fill="#777"/><rect x="545.5" y="425.00" width="4.5" height="1" fill="#777"/><rect x="542" y="305.75" width="8" height="1" fill="#8a8a8a"/><rect x="545.5" y="319.00" width="4.5" height="1" fill="#777"/><rect x="545.5" y="332.25" width="4.5" height="1" fill="#777"/><rect x="545.5" y="345.50" width="4.5" height="1" fill="#777"/><rect x="545.5" y="358.75" width="4.5" height="1" fill="#777"/><rect x="542" y="239.50" width="8" height="1" fill="#8a8a8a"/><rect x="545.5" y="252.75" width="4.5" height="1" fill="#777"/><rect x="545.5" y="266.00" width="4.5" height="1" fill="#777"/><rect x="545.5" y="279.25" width="4.5" height="1" fill="#777"/><rect x="545.5" y="292.50" width="4.5" height="1" fill="#777"/><rect x="542" y="173.25" width="8" height="1" fill="#8a8a8a"/><rect x="545.5" y="186.50" width="4.5" height="1" fill="#777"/><rect x="545.5" y="199.75" width="4.5" height="1" fill="#777"/><rect x="545.5" y="213.00" width="4.5" height="1" fill="#777"/><rect x="545.5" y="226.25" width="4.5" height="1" fill="#777"/><rect x="545.5" y="133.50" width="4.5" height="1" fill="#777"/><rect x="545.5" y="146.75" width="4.5" height="1" fill="#777"/><rect x="545.5" y="160.00" width="4.5" height="1" fill="#777"/></svg><div class="t" style="left:498.30px;top:566.25px;width:80px;height:10px;text-align:center;font-size:10px;color:#c4c4c4;transform:rotate(-90deg)">-600</div><div class="t" style="left:498.30px;top:500.00px;width:80px;height:10px;text-align:center;font-size:10px;color:#c4c4c4;transform:rotate(-90deg)">-400</div><div class="t" style="left:498.30px;top:433.75px;width:80px;height:10px;text-align:center;font-size:10px;color:#c4c4c4;transform:rotate(-90deg)">-200</div><div class="t" style="left:498.30px;top:367.50px;width:80px;height:10px;text-align:center;font-size:10px;color:#c4c4c4;transform:rotate(-90deg)">0</div><div class="t" style="left:498.30px;top:301.25px;width:80px;height:10px;text-align:center;font-size:10px;color:#c4c4c4;transform:rotate(-90deg)">200</div><div class="t" style="left:498.30px;top:235.00px;width:80px;height:10px;text-align:center;font-size:10px;color:#c4c4c4;transform:rotate(-90deg)">400</div><div class="t" style="left:498.30px;top:168.75px;width:80px;height:10px;text-align:center;font-size:10px;color:#c4c4c4;transform:rotate(-90deg)">600</div><div class="a" style="left:787px;top:193px;width:636px;height:358px;background:#0b0b0b;"></div><svg class="a" style="left:842px;top:341px;" width="62" height="62" viewBox="0 0 62 62"><defs><linearGradient id="g1" gradientUnits="userSpaceOnUse" x1="0" y1="1" x2="0" y2="61"><stop offset="0" stop-color="#30eb95"/><stop offset="0.45" stop-color="#1fd0c0"/><stop offset="1" stop-color="#0ea4f6"/></linearGradient></defs><g fill="none" stroke="url(#g1)" stroke-width="4.9" stroke-linejoin="miter" stroke-linecap="butt"><defs><clipPath id="eyec"><ellipse cx="31" cy="13" rx="13.6" ry="9"/></clipPath></defs><path d="M3.6 6V58.4H58.7V6"/><path d="M1.2 8.3H13M6 17.7H13M49 8.3H61M49 17.7H56"/><ellipse cx="31" cy="13" rx="13.6" ry="9"/><g clip-path="url(#eyec)"><circle cx="31" cy="9" r="7.8" fill="url(#g1)" stroke="none"/></g><circle cx="31" cy="8.3" r="2.2" fill="#0b0b0b" stroke="none"/><circle cx="22" cy="35.8" r="4.6" stroke-width="5"/><path d="M13.4 51V49Q13.4 45.2 18.5 45.2H25.5Q30.6 45.2 30.6 49V51"/><path d="M38 30.5H52.2M38 39.5H52.2M38 49H52.2"/></g></svg><svg class="a" style="left:935px;top:341px;" width="62" height="62" viewBox="0 0 62 62"><defs><linearGradient id="g2" gradientUnits="userSpaceOnUse" x1="0" y1="1" x2="0" y2="61"><stop offset="0" stop-color="#30eb95"/><stop offset="0.45" stop-color="#1fd0c0"/><stop offset="1" stop-color="#0ea4f6"/></linearGradient></defs><g fill="none" stroke="url(#g2)" stroke-width="4.9" stroke-linejoin="miter" stroke-linecap="butt"><rect x="3.5" y="3.5" width="55" height="55"/><path d="M3.5 17.5H58.5"/><path d="M12.7 5V11M21.8 5V11M31.5 5V11" stroke-width="4.9"/><circle cx="25.3" cy="35" r="6.9" stroke-width="4.8"/><path d="M20.5 40.5L12.5 48.5"/><path d="M40 28.3H51M40 37.9H51M40 47.4H51"/></g></svg><svg class="a" style="left:1028px;top:341px;" width="62" height="62" viewBox="0 0 62 62"><defs><linearGradient id="g3" gradientUnits="userSpaceOnUse" x1="0" y1="1" x2="0" y2="61"><stop offset="0" stop-color="#30eb95"/><stop offset="0.45" stop-color="#1fd0c0"/><stop offset="1" stop-color="#0ea4f6"/></linearGradient></defs><g fill="none" stroke="url(#g3)" stroke-width="4.9" stroke-linejoin="miter" stroke-linecap="butt"><path d="M3.4 10.8V46.5H58.1V10.8"/><rect x="12.35" y="3.4" width="36.3" height="32.5"/><circle cx="30.5" cy="17.4" r="4.65"/><path d="M22.2 35V32Q22.2 26.9 27.5 26.9H33.5Q39.7 26.9 39.7 32V35"/><path d="M23.5 46V57M37.6 46V57M13.8 58.5H47.3"/></g></svg><svg class="a" style="left:1121px;top:341px;" width="62" height="62" viewBox="0 0 62 62"><defs><linearGradient id="g4" gradientUnits="userSpaceOnUse" x1="0" y1="1" x2="0" y2="61"><stop offset="0" stop-color="#30eb95"/><stop offset="0.45" stop-color="#1fd0c0"/><stop offset="1" stop-color="#0ea4f6"/></linearGradient></defs><g fill="none" stroke="url(#g4)" stroke-width="4.9" stroke-linejoin="miter" stroke-linecap="butt"><defs><clipPath id="mtc"><rect x="5" y="17" width="52" height="39"/></clipPath></defs><path d="M15.5 17H2.7V58.5H57.6V17H45"/><path d="M30.5 27L20.5 17Q16.5 12.5 19.5 6.5Q24 1.5 30.5 7.5Q37 1.5 41.5 6.5Q44.5 12.5 40.5 17Z" stroke-width="4.6"/><circle cx="44.1" cy="31.4" r="4.5" stroke-width="5"/><g clip-path="url(#mtc)"><path d="M2 41L10.8 33.5L35 60M17 40.5L25.2 33.5L55 62M20 43L38 61"/></g></g></svg><svg class="a" style="left:1213px;top:341px;" width="62" height="62" viewBox="0 0 62 62"><defs><linearGradient id="g5" gradientUnits="userSpaceOnUse" x1="0" y1="1" x2="0" y2="61"><stop offset="0" stop-color="#30eb95"/><stop offset="0.45" stop-color="#1fd0c0"/><stop offset="1" stop-color="#0ea4f6"/></linearGradient></defs><g fill="none" stroke="url(#g5)" stroke-width="4.9" stroke-linejoin="miter" stroke-linecap="butt"><path d="M16.8 17.7H8.6V48M45 17.7H53.3V48"/><path d="M3.75 49.5H58.65V55.5Q58.65 58 56 58H6.4Q3.75 58 3.75 55.5Z"/><path d="M31.2 1V6"/><path d="M24.3 25V14.5Q24.3 7.5 31.2 7.5Q38.1 7.5 38.1 14.5V25" stroke-width="4.4"/><path d="M17.2 30.8H45.1V27.2L40.5 22.8H22L17.2 27.2Z" fill="url(#g5)" stroke="none"/><path d="M31.2 30V35.6" stroke-width="4"/></g></svg><svg class="a" style="left:1306px;top:341px;" width="62" height="62" viewBox="0 0 62 62"><defs><linearGradient id="g6" gradientUnits="userSpaceOnUse" x1="0" y1="1" x2="0" y2="61"><stop offset="0" stop-color="#30eb95"/><stop offset="0.45" stop-color="#1fd0c0"/><stop offset="1" stop-color="#0ea4f6"/></linearGradient></defs><g fill="none" stroke="url(#g6)" stroke-width="4.9" stroke-linejoin="miter" stroke-linecap="butt"><path d="M3.55 19.2V48.7H23L31 57.5L39 48.7H58.65V19.2" stroke-width="4.6"/><circle cx="30.7" cy="21.5" r="18.1" stroke-width="5"/><path d="M26.1 13.9V18.8M35.65 13.9V18.8" stroke-width="4.6"/><path d="M24.2 24.6A7 6.6 0 0 0 38.2 24.6" stroke-width="4.4"/></g></svg><div class="t" style="left:569.5px;top:502.20px;font-size:11.8px;color:#ececec">Hold S <span style="color:#585858">Direct Layer Selection</span></div><div class="t" style="left:569.5px;top:516.20px;font-size:11.8px;color:#ececec">Space <span style="color:#585858">Play/ Stop</span></div><div class="t" style="left:569.5px;top:530.20px;font-size:11.8px;color:#ececec">Space + click + drag <span style="color:#585858">Pan</span></div><div class="t" style="left:569.5px;top:544.20px;font-size:11.8px;color:#ececec">Alt + click + drag <span style="color:#585858">Move Pivot Point</span></div><div class="t" style="left:569.5px;top:558.20px;font-size:11.8px;color:#ececec">Shift <span style="color:#585858">Enable Snapping</span></div><div class="t" style="left:998px;top:577.27px;font-size:12.2px;color:#f0f0f0;">Viewport Quality: High</div><div class="a" style="left:535px;top:601px;width:77px;height:16px;background:#2c2c2c;border-radius:3px"></div><div class="t" style="left:538.5px;top:604.11px;font-size:11.8px;color:#e8e8e8;">33%</div><svg class="a" style="left:597px;top:606px;" width="10" height="6" viewBox="0 0 10 6"><path d="M0.5 0.5L5 5L9.5 0.5" stroke="#bbb" fill="none"/></svg><div class="a" style="left:866.5px;top:600px;width:100px;height:18.5px;background:#2a2a2a;border-radius:3px;border:1px solid #262626"></div><div class="a" style="left:886px;top:601px;width:1px;height:16px;background:#3a3a3a;"></div><div class="a" style="left:906px;top:601px;width:1px;height:16px;background:#3a3a3a;"></div><div class="a" style="left:926px;top:601px;width:1px;height:16px;background:#3a3a3a;"></div><div class="a" style="left:946px;top:601px;width:1px;height:16px;background:#3a3a3a;"></div><svg class="a" style="left:870px;top:603px;" width="12" height="12" viewBox="0 0 12 12"><rect x="2" y="1" width="2" height="10" fill="#e6e6e6"/><path d="M11 1V11L4.5 6Z" fill="#e6e6e6"/></svg><svg class="a" style="left:890px;top:603px;" width="12" height="12" viewBox="0 0 12 12"><path d="M7 1V11L1 6Z" fill="#e6e6e6"/><rect x="8.5" y="1" width="2" height="10" fill="#e6e6e6"/></svg><svg class="a" style="left:910px;top:603px;" width="12" height="12" viewBox="0 0 12 12"><path d="M3 1V11L10 6Z" fill="#e6e6e6"/></svg><svg class="a" style="left:930px;top:603px;" width="12" height="12" viewBox="0 0 12 12"><rect x="1.5" y="1" width="2" height="10" fill="#e6e6e6"/><path d="M5 1V11L11 6Z" fill="#e6e6e6"/></svg><svg class="a" style="left:950px;top:603px;" width="12" height="12" viewBox="0 0 12 12"><path d="M1 1V11L7.5 6Z" fill="#e6e6e6"/><rect x="8" y="1" width="2" height="10" fill="#e6e6e6"/></svg><div class="a" style="left:971.5px;top:600px;width:19px;height:18.5px;background:#2a2a2a;border-radius:3px;border:1px solid #262626"></div><svg class="a" style="left:974px;top:603px;" width="14" height="12" viewBox="0 0 14 12"><path d="M1 3V10H12V6" stroke="#e6e6e6" stroke-width="1.3" fill="none"/><path d="M6 5H11M9 2.5L11.5 5L9 7.5" stroke="#e6e6e6" stroke-width="1.3" fill="none"/></svg><div class="a" style="left:1232.4px;top:599.5px;width:36px;height:19px;background:#2a2a2a;border-radius:3px;border:1px solid #262626"></div><div class="a" style="left:1272.3px;top:599.5px;width:31px;height:19px;background:#2a2a2a;border-radius:3px;border:1px solid #262626"></div><div class="a" style="left:1307px;top:599.5px;width:31px;height:19px;background:#2a2a2a;border-radius:3px;border:1px solid #262626"></div><div class="a" style="left:1342.4px;top:599.5px;width:30.5px;height:19px;background:#2a2a2a;border-radius:3px;border:1px solid #262626"></div><div class="a" style="left:1377px;top:599.5px;width:19px;height:19px;background:#2a2a2a;border-radius:3px;border:1px solid #262626"></div><div class="a" style="left:1400px;top:599.5px;width:19.4px;height:19px;background:#2a2a2a;border-radius:3px;border:1px solid #262626"></div><div class="a" style="left:1423.3px;top:599.5px;width:31px;height:19px;background:#2a2a2a;border-radius:3px;border:1px solid #262626"></div><div class="a" style="left:1458px;top:599.5px;width:31px;height:19px;background:#2a2a2a;border-radius:3px;border:1px solid #262626"></div><div class="a" style="left:1492.8px;top:599.5px;width:31px;height:19px;background:#2a2a2a;border-radius:3px;border:1px solid #262626"></div><div class="a" style="left:1528px;top:599.5px;width:31px;height:19px;background:#2a2a2a;border-radius:3px;border:1px solid #262626"></div><div class="a" style="left:1563.2px;top:599.5px;width:19.3px;height:19px;background:#2a2a2a;border-radius:3px;border:1px solid #262626"></div><div class="a" style="left:1291px;top:601px;width:1px;height:16px;background:#353535;"></div><svg class="a" style="left:1294px;top:605px;" width="6" height="8" viewBox="0 0 6 8"><path d="M0.5 0.5L5 4L0.5 7.5Z" fill="none" stroke="#999" stroke-width="0.9"/></svg><div class="a" style="left:1326px;top:601px;width:1px;height:16px;background:#353535;"></div><svg class="a" style="left:1329px;top:605px;" width="6" height="8" viewBox="0 0 6 8"><path d="M0.5 0.5L5 4L0.5 7.5Z" fill="none" stroke="#999" stroke-width="0.9"/></svg><div class="a" style="left:1360.5px;top:601px;width:1px;height:16px;background:#353535;"></div><svg class="a" style="left:1363.5px;top:605px;" width="6" height="8" viewBox="0 0 6 8"><path d="M0.5 0.5L5 4L0.5 7.5Z" fill="none" stroke="#999" stroke-width="0.9"/></svg><div class="a" style="left:1442px;top:601px;width:1px;height:16px;background:#353535;"></div><svg class="a" style="left:1445px;top:605px;" width="6" height="8" viewBox="0 0 6 8"><path d="M0.5 0.5L5 4L0.5 7.5Z" fill="none" stroke="#999" stroke-width="0.9"/></svg><div class="a" style="left:1477px;top:601px;width:1px;height:16px;background:#353535;"></div><svg class="a" style="left:1480px;top:605px;" width="6" height="8" viewBox="0 0 6 8"><path d="M0.5 0.5L5 4L0.5 7.5Z" fill="none" stroke="#999" stroke-width="0.9"/></svg><div class="a" style="left:1512px;top:601px;width:1px;height:16px;background:#353535;"></div><svg class="a" style="left:1515px;top:605px;" width="6" height="8" viewBox="0 0 6 8"><path d="M0.5 0.5L5 4L0.5 7.5Z" fill="none" stroke="#999" stroke-width="0.9"/></svg><div class="a" style="left:1547px;top:601px;width:1px;height:16px;background:#353535;"></div><svg class="a" style="left:1550px;top:605px;" width="6" height="8" viewBox="0 0 6 8"><path d="M0.5 0.5L5 4L0.5 7.5Z" fill="none" stroke="#999" stroke-width="0.9"/></svg><svg class="a" style="left:1235px;top:604px;" width="14" height="10" viewBox="0 0 14 10"><path d="M4 0H14V10H4L0 5Z" fill="#ccc"/><circle cx="5" cy="5" r="1.5" fill="#333"/></svg><div class="t" style="left:1257px;top:605.37px;font-size:11.5px;color:#aaa;">0</div><svg class="a" style="left:1275px;top:603px;" width="16" height="12" viewBox="0 0 16 12"><path d="M1 4H4L8 1V11L4 8H1Z" fill="#2ecc71"/><path d="M10 3.5Q11.5 6 10 8.5M12.5 2Q15 6 12.5 10" stroke="#2ecc71" stroke-width="1.2" fill="none"/></svg><svg class="a" style="left:1310px;top:602px;" width="15" height="14" viewBox="0 0 15 14"><path d="M2 11A5.5 5.5 0 0 1 12 5" stroke="#ddd" stroke-width="2.4" fill="none"/><rect x="1" y="11" width="3" height="2.5" fill="#ddd"/><rect x="11" y="3" width="2.5" height="3" fill="#ddd"/></svg><svg class="a" style="left:1345px;top:602px;" width="15" height="15" viewBox="0 0 15 15"><path d="M4.5 0V15M10.5 0V15M0 4.5H15M0 10.5H15" stroke="#ddd" stroke-width="1.3"/></svg><svg class="a" style="left:1379px;top:602px;" width="15" height="13" viewBox="0 0 15 13"><rect x="0" y="0" width="4" height="13" fill="#2ecc71"/><rect x="5" y="1" width="10" height="4" fill="#2ecc71"/><rect x="5" y="7" width="10" height="4" fill="#2ecc71"/></svg><svg class="a" style="left:1402px;top:603px;" width="15" height="12" viewBox="0 0 15 12"><path d="M1 1L5.5 6L1 11M5.5 1L10 6L5.5 11M10 1L14.5 6L10 11" stroke="#ddd" stroke-width="1.4" fill="none"/></svg><svg class="a" style="left:1426px;top:602px;" width="16" height="14" viewBox="0 0 16 14"><rect x="1" y="1" width="14" height="10" fill="none" stroke="#ddd" stroke-width="1.3"/><rect x="0" y="11" width="16" height="2.5" fill="#ddd"/></svg><svg class="a" style="left:1461px;top:602px;" width="16" height="15" viewBox="0 0 16 15"><rect x="1" y="1" width="9" height="7" fill="none" stroke="#ccc"/><path d="M3 10H12V3M5 12H14V5" stroke="#ccc" fill="none"/></svg><svg class="a" style="left:1495px;top:602px;" width="16" height="15" viewBox="0 0 16 15"><rect x="1" y="1" width="9" height="8" fill="#ccc"/><rect x="5.5" y="5.5" width="9" height="8.5" fill="#2a2a2a" stroke="#ddd" stroke-width="1.2"/></svg><svg class="a" style="left:1531px;top:602px;" width="15" height="15" viewBox="0 0 15 15"><rect x="0" y="0" width="3" height="3" fill="#2ecc71"/><rect x="0" y="6" width="3" height="3" fill="#2ecc71"/><rect x="0" y="12" width="3" height="3" fill="#2ecc71"/><rect x="3" y="3" width="3" height="3" fill="#2ecc71"/><rect x="3" y="9" width="3" height="3" fill="#2ecc71"/><rect x="6" y="0" width="3" height="3" fill="#2ecc71"/><rect x="6" y="6" width="3" height="3" fill="#2ecc71"/><rect x="6" y="12" width="3" height="3" fill="#2ecc71"/><rect x="9" y="3" width="3" height="3" fill="#2ecc71"/><rect x="9" y="9" width="3" height="3" fill="#2ecc71"/><rect x="12" y="0" width="3" height="3" fill="#2ecc71"/><rect x="12" y="6" width="3" height="3" fill="#2ecc71"/><rect x="12" y="12" width="3" height="3" fill="#2ecc71"/></svg><svg class="a" style="left:1565px;top:601px;" width="15" height="15" viewBox="0 0 15 15"><circle cx="7.5" cy="7.5" r="4" fill="none" stroke="#ddd" stroke-width="2.6"/><g stroke="#ddd" stroke-width="2.2"><path d="M7.5 0.5V3M7.5 12V14.5M0.5 7.5H3M12 7.5H14.5M2.5 2.5L4.3 4.3M10.7 10.7L12.5 12.5M12.5 2.5L10.7 4.3M4.3 10.7L2.5 12.5"/></g></svg><div class="a" style="left:1587px;top:85px;width:6px;height:541px;background:#151515;"></div>
<div class="a" style="left:1593px;top:85px;width:321px;height:22px;background:#1c1c1c;"></div><div class="a" style="left:1593px;top:85px;width:40px;height:22px;background:#454545;border-radius:3px 3px 0 0"></div><div class="a" style="left:1634px;top:85px;width:69px;height:22px;background:#242424;border-radius:3px 3px 0 0"></div><div class="t" style="left:1598px;top:91.61px;font-size:11.8px;color:#e6e6e6;">Color</div><div class="t" style="left:1639px;top:91.61px;font-size:11.8px;color:#e6e6e6;">Add Layers</div><div class="a" style="left:1593px;top:107px;width:321px;height:417px;background:#454545;"></div><div class="a" style="left:1900px;top:107px;width:14px;height:417px;background:#383838;"></div><div class="a" style="left:1902px;top:108px;width:10px;height:368px;background:#4f4f4f;border-radius:5px"></div><div class="a" style="left:1646.2px;top:119.4px;width:200px;height:200px;border-radius:50%;background:conic-gradient(#99ff00 0deg,#ffff00 35deg,#ff0000 90deg,#ff00ff 138deg,#0000ff 213deg,#00e5ff 250deg,#00ffa0 283deg,#00ff00 318deg,#99ff00 360deg);-webkit-mask:radial-gradient(circle,transparent 74.5px,#000 75.5px);mask:radial-gradient(circle,transparent 74.5px,#000 75.5px)"></div><div class="a" style="left:1702px;top:175.6px;width:90.5px;height:90.5px;background:linear-gradient(to right,#000,rgba(0,0,0,0)),linear-gradient(to bottom,#fff,#f00);"></div><div class="a" style="left:1731px;top:169.5px;width:12.5px;height:12.5px;border-radius:50%;border:1.3px solid #d0d0d0"></div><div class="a" style="left:1826.6px;top:213.6px;width:12.5px;height:12.5px;border-radius:50%;border:1.3px solid #fff"></div><div class="a" style="left:1600px;top:333px;width:21.5px;height:21.5px;background:#646464;border-radius:3px"></div><div class="t" style="left:1625.5px;top:339.61px;font-size:11.8px;color:#e6e6e6;">Dim Gray</div><div class="a" style="left:1871px;top:333px;width:22px;height:22px;background:#2a2a2a;border-radius:3px;border:1px solid #232323"></div><svg class="a" style="left:1876px;top:338px;" width="12" height="12" viewBox="0 0 12 12"><path d="M1 11L7 5" stroke="#ccc" stroke-width="1.6"/><path d="M6 3L9 6" stroke="#ccc" stroke-width="2.6"/><circle cx="9.5" cy="2.5" r="1.8" fill="#ccc"/></svg><div class="a" style="left:1600px;top:360.5px;width:50px;height:17.5px;background:#4f4f4f;border-radius:3px;border:1px solid #2f2f2f"></div><div class="t" style="left:1603px;top:364.61px;font-size:11.8px;color:#e6e6e6;">Hex</div><svg class="a" style="left:1634px;top:366px;" width="10" height="6" viewBox="0 0 10 6"><path d="M0.5 0.5L5 5L9.5 0.5" stroke="#bbb" fill="none"/></svg><div class="a" style="left:1653px;top:358.5px;width:240px;height:21px;background:#2b2b2b;border-radius:2px"></div><div class="t" style="left:1659px;top:366.14px;font-size:10px;color:#666;">#</div><div class="t" style="left:1670px;top:364.61px;font-size:11.8px;color:#e6e6e6;">646464</div><div class="a" style="left:1600px;top:390px;width:236px;height:4px;background:#e6e6e6;border-radius:2px"></div><div class="a" style="left:1828px;top:386px;width:12px;height:12px;border-radius:50%;background:#6cc3a6;box-shadow:0 0 0 1px #3d6b5c inset"></div><div class="a" style="left:1832.5px;top:390.5px;width:3px;height:3px;background:#4b8c76;border-radius:50%"></div><div class="a" style="left:1849px;top:384px;width:44px;height:15.5px;background:#2b2b2b;border-radius:2px"></div><div class="t" style="left:1854px;top:388.21px;font-size:10.5px;color:#555;">A</div><div class="t" style="left:1867px;top:387.11px;font-size:11.8px;color:#e6e6e6;">255</div><div class="a" style="left:1597px;top:406px;width:299px;height:22px;background:#262626;"></div><div class="a" style="left:1599px;top:408px;width:148px;height:20px;background:#454545;border-radius:3px 3px 0 0"></div><div class="t" style="left:1650px;top:412.61px;font-size:11.8px;color:#e6e6e6;">Swatches</div><div class="t" style="left:1793px;top:412.61px;font-size:11.8px;color:#cfcfcf;">Generator</div><div class="a" style="left:1597px;top:428px;width:299px;height:22px;background:#454545;"></div><div class="a" style="left:1599px;top:431px;width:257px;height:17.5px;background:#5a5a5a;border-radius:3px"></div><div class="a" style="left:1599px;top:431px;width:62px;height:17.5px;background:#262626;border-radius:3px"></div><svg class="a" style="left:1604px;top:434px;" width="12" height="11" viewBox="0 0 12 11"><path d="M1 0.5V10.5M4 0.5V10.5" stroke="#2ecc71" stroke-width="1.6"/><path d="M6.5 0.8L10.5 10.3" stroke="#2ecc71" stroke-width="1.6"/></svg><div class="t" style="left:1620px;top:435.11px;font-size:11.8px;color:#e6e6e6;">Library</div><svg class="a" style="left:1670px;top:434px;" width="12" height="11" viewBox="0 0 12 11"><path d="M0.5 0.5H5L6 2H11.5V10.5H0.5Z" fill="none" stroke="#ccc"/><path d="M3 5H9M3 7.5H9" stroke="#ccc"/></svg><div class="t" style="left:1686px;top:435.11px;font-size:11.8px;color:#e6e6e6;">Project</div><svg class="a" style="left:1739px;top:433px;" width="10" height="12" viewBox="0 0 10 12"><path d="M0.5 0.5H6L9.5 4V11.5H0.5Z" fill="none" stroke="#ccc"/></svg><div class="t" style="left:1752px;top:435.11px;font-size:11.8px;color:#e6e6e6;">Scene</div><svg class="a" style="left:1800px;top:433px;" width="12" height="12" viewBox="0 0 12 12"><path d="M0.5 6A5.5 5.5 0 0 1 11.5 6V11.5H6A5.5 5.5 0 0 1 0.5 6Z" fill="none" stroke="#ccc"/></svg><div class="t" style="left:1816px;top:435.11px;font-size:11.8px;color:#e6e6e6;">Labels</div><div class="a" style="left:1858px;top:431px;width:36px;height:17.5px;background:#5a5a5a;border-radius:3px"></div><div class="a" style="left:1858px;top:431px;width:17.5px;height:17.5px;background:#262626;border-radius:3px"></div><svg class="a" style="left:1862px;top:435px;" width="10" height="10" viewBox="0 0 10 10"><g fill="#2ecc71"><rect x="0" y="0" width="4" height="4"/><rect x="6" y="0" width="4" height="4"/><rect x="0" y="6" width="4" height="4"/><rect x="6" y="6" width="4" height="4"/></g></svg><svg class="a" style="left:1880px;top:435px;" width="12" height="10" viewBox="0 0 12 10"><path d="M0 1H12M0 5H12M0 9H12" stroke="#ccc" stroke-width="1.2"/></svg><div class="a" style="left:1598.7px;top:452.5px;width:274.5px;height:16.5px;background:#4f4f4f;border-radius:2px"></div><div class="t" style="left:1601px;top:456.11px;font-size:11.8px;color:#e6e6e6;">Simple</div><svg class="a" style="left:1860px;top:458px;" width="10" height="6" viewBox="0 0 10 6"><path d="M0.5 0.5L5 5L9.5 0.5" stroke="#bbb" fill="none"/></svg><div class="a" style="left:1883px;top:460px;width:2px;height:2px;background:#ccc;"></div><div class="a" style="left:1887.5px;top:460px;width:2px;height:2px;background:#ccc;"></div><div class="a" style="left:1892px;top:460px;width:2px;height:2px;background:#ccc;"></div><div class="a" style="left:1598px;top:469px;width:298px;height:55px;background:#262626;"></div><div class="a" style="left:1600.5px;top:471.5px;width:18px;height:18px;background:#1f78c1;border-radius:3px"></div><div class="a" style="left:1622.5px;top:471.5px;width:18px;height:18px;background:#16a0e0;border-radius:3px"></div><div class="a" style="left:1644.5px;top:471.5px;width:18px;height:18px;background:#8fc36a;border-radius:3px"></div><div class="a" style="left:1666.5px;top:471.5px;width:18px;height:18px;background:#f2e24a;border-radius:3px"></div><div class="a" style="left:1688.5px;top:471.5px;width:18px;height:18px;background:#f07c1a;border-radius:3px"></div><div class="a" style="left:1593px;top:524px;width:321px;height:6px;background:#151515;"></div><div class="a" style="left:1593px;top:530px;width:321px;height:22px;background:#1c1c1c;"></div><div class="a" style="left:1593px;top:530px;width:38px;height:22px;background:#454545;border-radius:3px 3px 0 0"></div><div class="t" style="left:1598px;top:536.61px;font-size:11.8px;color:#e6e6e6;">Align</div><div class="a" style="left:1593px;top:552px;width:321px;height:68px;background:#454545;"></div><div class="t" style="left:1601px;top:566.91px;font-size:11.8px;color:#e6e6e6;">Alignment</div><div class="t" style="left:1601px;top:594.61px;font-size:11.8px;color:#e6e6e6;">Distribution</div><div class="a" style="left:1790.5px;top:562.5px;width:53px;height:17px;background:#262626;border-radius:4px;border:1px solid #222"></div><svg class="a" style="left:1793.5px;top:565.0px;" width="12" height="12" viewBox="0 0 12 12"><path d="M1 0V12" stroke="#e0e0e0"/><rect x="3" y="2.5" width="5" height="2" fill="#e0e0e0"/><rect x="3" y="7.5" width="8" height="2" fill="#e0e0e0"/></svg><div class="a" style="left:1808.2px;top:563.5px;width:1px;height:15px;background:#444;"></div><svg class="a" style="left:1811.2px;top:565.0px;" width="12" height="12" viewBox="0 0 12 12"><path d="M6 0V12" stroke="#e0e0e0"/><rect x="2.5" y="2.5" width="7" height="2" fill="#e0e0e0"/><rect x="1" y="7.5" width="10" height="2" fill="#e0e0e0"/></svg><div class="a" style="left:1825.9px;top:563.5px;width:1px;height:15px;background:#444;"></div><svg class="a" style="left:1828.9px;top:565.0px;" width="12" height="12" viewBox="0 0 12 12"><path d="M11 0V12" stroke="#e0e0e0"/><rect x="4" y="2.5" width="5" height="2" fill="#e0e0e0"/><rect x="1" y="7.5" width="8" height="2" fill="#e0e0e0"/></svg><div class="a" style="left:1852.5px;top:562.5px;width:53px;height:17px;background:#262626;border-radius:4px;border:1px solid #222"></div><svg class="a" style="left:1855.5px;top:565.0px;" width="12" height="12" viewBox="0 0 12 12"><path d="M0 1H12" stroke="#e0e0e0"/><rect x="2.5" y="3" width="2" height="8" fill="#e0e0e0"/><rect x="7.5" y="3" width="2" height="5" fill="#e0e0e0"/></svg><div class="a" style="left:1870.2px;top:563.5px;width:1px;height:15px;background:#444;"></div><svg class="a" style="left:1873.2px;top:565.0px;" width="12" height="12" viewBox="0 0 12 12"><path d="M0 6H12" stroke="#e0e0e0"/><rect x="2.5" y="1" width="2" height="10" fill="#e0e0e0"/><rect x="7.5" y="2.5" width="2" height="7" fill="#e0e0e0"/></svg><div class="a" style="left:1887.9px;top:563.5px;width:1px;height:15px;background:#444;"></div><svg class="a" style="left:1890.9px;top:565.0px;" width="12" height="12" viewBox="0 0 12 12"><path d="M0 11H12" stroke="#e0e0e0"/><rect x="2.5" y="1" width="2" height="8" fill="#e0e0e0"/><rect x="7.5" y="4" width="2" height="5" fill="#e0e0e0"/></svg><div class="a" style="left:1790.5px;top:591px;width:53px;height:17px;background:#262626;border-radius:4px;border:1px solid #222"></div><svg class="a" style="left:1793.5px;top:593.5px;" width="12" height="12" viewBox="0 0 12 12"><path d="M1 0V12M11 0V12" stroke="#e0e0e0"/><rect x="4" y="2" width="2.5" height="8" fill="#e0e0e0"/></svg><div class="a" style="left:1808.2px;top:592px;width:1px;height:15px;background:#444;"></div><svg class="a" style="left:1811.2px;top:593.5px;" width="12" height="12" viewBox="0 0 12 12"><path d="M0 1H12M0 11H12" stroke="#e0e0e0"/><rect x="2" y="5" width="8" height="2" fill="#e0e0e0"/></svg><div class="a" style="left:1825.9px;top:592px;width:1px;height:15px;background:#444;"></div><svg class="a" style="left:1828.9px;top:593.5px;" width="12" height="12" viewBox="0 0 12 12"><path d="M0 11L2 11M3 9L5 9M6 6H8M9 3H11" stroke="#e0e0e0" stroke-width="1.5"/><path d="M1 1V12M11 0V11" stroke="#e0e0e0" stroke-dasharray="2 1.5"/></svg><div class="a" style="left:1914px;top:85px;width:6px;height:541px;background:#202020;"></div>
<div class="a" style="left:494px;top:620px;width:1420px;height:6px;background:#161616;"></div><div class="a" style="left:494px;top:626px;width:1420px;height:24px;background:#1c1c1c;"></div><div class="a" style="left:494px;top:626px;width:120px;height:24px;background:#444;border-radius:3px 3px 0 0"></div><div class="a" style="left:615px;top:626px;width:182px;height:24px;background:#2a2a2a;border-radius:3px 3px 0 0"></div><div class="t" style="left:690px;top:632.11px;font-size:11.8px;color:#e6e6e6;">Dependency Graph</div><div class="a" style="left:494px;top:650px;width:525px;height:62px;background:#454545;"></div><div class="a" style="left:1017px;top:648.5px;width:892px;height:21.5px;background:#474747;border-radius:0 4px 0 0"></div><div class="t" style="left:1165px;top:655.61px;font-size:11.8px;color:#e6e6e6;">Composition 1</div><div class="a" style="left:1909px;top:650px;width:5px;height:312px;background:#262626;"></div><div class="a" style="left:496px;top:672px;width:314.5px;height:20px;background:#262626;border-radius:10px"></div><svg class="a" style="left:501px;top:675px;" width="13" height="13" viewBox="0 0 13 13"><circle cx="5.5" cy="5.5" r="4.3" stroke="#ddd" stroke-width="1.2" fill="none"/><path d="M8.6 8.6L12 12" stroke="#ddd" stroke-width="1.8"/></svg><div class="t" style="left:520px;top:677.11px;font-size:11.8px;color:#8a8a8a;">Enter a layer name</div><div class="a" style="left:813.2px;top:672.4px;width:19.2px;height:19.2px;background:#2c2c2c;border-radius:4px;border:1px solid #232323"></div><div class="a" style="left:857.2px;top:672.4px;width:19.2px;height:19.2px;background:#2c2c2c;border-radius:4px;border:1px solid #232323"></div><div class="a" style="left:879.3px;top:672.4px;width:19.2px;height:19.2px;background:#2c2c2c;border-radius:4px;border:1px solid #232323"></div><div class="a" style="left:901.6px;top:672.4px;width:19.2px;height:19.2px;background:#2c2c2c;border-radius:4px;border:1px solid #232323"></div><svg class="a" style="left:816px;top:675px;" width="14" height="14" viewBox="0 0 14 14"><path d="M6.8 1.5V12.5M1.5 7H12.5" stroke="#e6e6e6" stroke-width="2"/><path d="M11 14h3v-3z" fill="#5cc9a7"/></svg><svg class="a" style="left:860px;top:675px;" width="14" height="14" viewBox="0 0 14 14"><circle cx="9.5" cy="4.5" r="3.8" fill="#d6d6d6"/><path d="M2 12.5A5 5 0 0 1 5 5.5" stroke="#888" stroke-width="1.2" fill="none"/><path d="M4 13.5A5 5 0 0 1 7 7" stroke="#777" stroke-width="1.2" fill="none"/></svg><svg class="a" style="left:882px;top:675px;" width="14" height="14" viewBox="0 0 14 14"><g fill="#ccc"><circle cx="3" cy="2.5" r="1.2"/><circle cx="10" cy="2.5" r="1.2"/><circle cx="3" cy="8.5" r="1.2"/><rect x="6" y="8.3" width="7" height="1.6"/><rect x="8.7" y="5.6" width="1.6" height="7"/></g><path d="M11 14h3v-3z" fill="#5cc9a7"/></svg><svg class="a" style="left:904px;top:675px;" width="14" height="14" viewBox="0 0 14 14"><g stroke="#ccc" stroke-width="1.1" fill="none"><path d="M0 2.5H3M7 2.5H13M0 7H5M9 7H13M0 11.5H3M7 11.5H12"/><circle cx="5" cy="2.5" r="1.6"/><circle cx="7" cy="7" r="1.6"/><circle cx="5" cy="11.5" r="1.6"/></g><path d="M11 14h3v-3z" fill="#5cc9a7"/></svg><div class="a" style="left:923.4px;top:672.4px;width:93.4px;height:19.4px;background:#272727;border-radius:3px"></div><div class="t" style="left:929px;top:677.11px;font-size:11.8px;color:#555;">F</div><div class="t" style="left:939.5px;top:677.11px;font-size:11.8px;color:#e6e6e6;">0</div><svg class="a" style="left:500px;top:697px;" width="10" height="13" viewBox="0 0 10 13"><path d="M2.3 6V4A2.7 2.7 0 0 1 7.7 4V6" stroke="#c8c8c8" stroke-width="1.4" fill="none"/><rect x="0.5" y="6" width="9" height="7" fill="#c8c8c8"/><rect x="4" y="8.5" width="2" height="2" fill="#3d3d3d"/></svg><svg class="a" style="left:516px;top:698px;" width="14" height="10" viewBox="0 0 14 10"><path d="M0.5 5Q7 -2.5 13.5 5Q7 12.5 0.5 5Z" fill="none" stroke="#c8c8c8"/><circle cx="7" cy="5" r="2.2" fill="#c8c8c8"/></svg><svg class="a" style="left:536px;top:697px;" width="13" height="14" viewBox="0 0 13 14"><path d="M6.5 0.6L12.2 3.6V10.2L6.5 13.3L0.8 10.2V3.6Z M0.8 3.6L6.5 6.8L12.2 3.6 M6.5 6.8V13.3" fill="none" stroke="#c8c8c8" stroke-width="1.1"/></svg><svg class="a" style="left:555px;top:698px;" width="14" height="12" viewBox="0 0 14 12"><path d="M0.5 3.5H3L7 0.5V11.5L3 8.5H0.5Z" fill="#c8c8c8"/><path d="M9 3Q10.5 6 9 9M11 1.5Q13.5 6 11 10.5" stroke="#c8c8c8" stroke-width="1.2" fill="none"/></svg><svg class="a" style="left:574px;top:697px;" width="13" height="13" viewBox="0 0 13 13"><path d="M1 12L7 6" stroke="#c8c8c8" stroke-width="1.6"/><path d="M6 4L9 7" stroke="#c8c8c8" stroke-width="2.6"/><circle cx="10" cy="3" r="2.2" fill="#c8c8c8"/></svg><svg class="a" style="left:593px;top:699px;" width="14" height="10" viewBox="0 0 14 10"><path d="M4 0.5H14V9.5H4L0.5 5Z" fill="#c8c8c8"/><circle cx="5" cy="5" r="1.6" fill="#333"/></svg><div class="t" style="left:649px;top:698.61px;font-size:11.8px;color:#e6e6e6;">Name</div><div class="a" style="left:494px;top:712px;width:513px;height:250px;background:#2a2a2a;"></div><div class="a" style="left:1007px;top:712px;width:12px;height:250px;background:#2f2f2f;"></div><div class="a" style="left:1008px;top:716px;width:9px;height:243px;background:#474747;border-radius:5px"></div><div class="a" style="left:494px;top:712px;width:513px;height:22px;background:#373737;"></div><div class="a" style="left:496px;top:714px;width:17px;height:19px;background:#262626;border-radius:3px"></div><div class="a" style="left:515px;top:714px;width:18px;height:19px;background:#262626;border-radius:3px"></div><svg class="a" style="left:518px;top:717px;" width="12" height="12" viewBox="0 0 12 12"><circle cx="6" cy="6.3" r="4.8" stroke="#ccc" fill="none" stroke-width="1.1"/><path d="M3.5 6L6 8.4L11 2.5" stroke="#ccc" stroke-width="1.5" fill="none"/></svg><div class="a" style="left:573px;top:715px;width:16px;height:16px;background:#5b87e0;border-radius:3px;box-shadow:0 0 0 1px #1d1d1d"></div><svg class="a" style="left:593px;top:718px;" width="14" height="10" viewBox="0 0 14 10"><path d="M4 0.5H14V9.5H4L0.5 5Z" fill="#c8c8c8"/><circle cx="5" cy="5" r="1.6" fill="#333"/></svg><svg class="a" style="left:649px;top:716px;" width="15" height="14" viewBox="0 0 15 14"><path d="M6 0.5H14M6 3H14M8 5.5H14" stroke="#ddd" stroke-width="1"/><rect x="0.5" y="5.5" width="10" height="8" fill="none" stroke="#8ec5f0" stroke-width="1.2"/><path d="M2 12L4.5 9L6.5 11L8 10L9.5 12Z" fill="#8ec5f0"/></svg><div class="t" style="left:667px;top:718.61px;font-size:11.8px;color:#e6e6e6;">Group Array</div><div class="a" style="left:965px;top:714px;width:20.5px;height:19px;background:#262626;border-radius:4px"></div><svg class="a" style="left:968px;top:719px;" width="15" height="9" viewBox="0 0 15 9"><path d="M5 0V9L0.5 4.5Z" fill="#e3d36f"/><path d="M9.5 0V9L14 4.5Z" fill="#d64de8"/></svg><svg class="a" style="left:990px;top:718px;" width="11" height="11" viewBox="0 0 11 11"><circle cx="5.5" cy="5.5" r="4.6" stroke="#888" fill="none" stroke-width="1.1"/></svg><div class="a" style="left:494px;top:734px;width:513px;height:22px;background:#4b4e3e;"></div><div class="a" style="left:494px;top:734px;width:513px;height:22px;background:none;border-top:1px solid #3f4035;border-bottom:1px solid #3f4035"></div><div class="a" style="left:496px;top:736px;width:17px;height:19px;background:#2f3028;border-radius:3px"></div><div class="a" style="left:515px;top:736px;width:18px;height:19px;background:#2f3028;border-radius:3px"></div><svg class="a" style="left:518px;top:739px;" width="12" height="12" viewBox="0 0 12 12"><circle cx="6" cy="6.3" r="4.8" stroke="#ccc" fill="none" stroke-width="1.1"/><path d="M3.5 6L6 8.4L11 2.5" stroke="#ccc" stroke-width="1.5" fill="none"/></svg><div class="a" style="left:573px;top:737px;width:16px;height:16px;background:#c8ec7c;border-radius:3px;box-shadow:0 0 0 1px #1d1d1d"></div><svg class="a" style="left:593px;top:740px;" width="14" height="10" viewBox="0 0 14 10"><path d="M4 0.5H14V9.5H4L0.5 5Z" fill="#c8c8c8"/><circle cx="5" cy="5" r="1.6" fill="#333"/></svg><svg class="a" style="left:650px;top:740px;" width="12" height="10" viewBox="0 0 12 10"><path d="M1 1H11L6 9Z" stroke="#63d486" fill="none" stroke-width="1.2"/></svg><div class="t" style="left:667px;top:740.61px;font-size:11.8px;color:#e6e6e6;">Value [Shape Scale]</div><div class="a" style="left:965px;top:736px;width:20.5px;height:19px;background:#262626;border-radius:4px"></div><svg class="a" style="left:968px;top:741px;" width="15" height="9" viewBox="0 0 15 9"><path d="M5 0V9L0.5 4.5Z" fill="#666"/><path d="M9.5 0V9L14 4.5Z" fill="#d64de8"/></svg><svg class="a" style="left:990px;top:740px;" width="11" height="11" viewBox="0 0 11 11"><circle cx="5.5" cy="5.5" r="4.6" stroke="#888" fill="none" stroke-width="1.1"/></svg><div class="a" style="left:494px;top:756px;width:513px;height:22px;background:#373737;"></div><div class="a" style="left:496px;top:758px;width:17px;height:19px;background:#262626;border-radius:3px"></div><div class="a" style="left:515px;top:758px;width:18px;height:19px;background:#262626;border-radius:3px"></div><div class="a" style="left:534px;top:758px;width:18px;height:19px;background:#262626;border-radius:3px"></div><svg class="a" style="left:517px;top:763px;" width="14" height="10" viewBox="0 0 14 10"><path d="M0.5 5Q7 -2.5 13.5 5Q7 12.5 0.5 5Z" fill="none" stroke="#c8c8c8"/><circle cx="7" cy="5" r="2.2" fill="#c8c8c8"/></svg><div class="a" style="left:573px;top:759px;width:16px;height:16px;background:#fde27a;border-radius:3px;box-shadow:0 0 0 1px #1d1d1d"></div><svg class="a" style="left:593px;top:762px;" width="14" height="10" viewBox="0 0 14 10"><path d="M4 0.5H14V9.5H4L0.5 5Z" fill="#c8c8c8"/><circle cx="5" cy="5" r="1.6" fill="#333"/></svg><svg class="a" style="left:649px;top:760px;" width="14" height="14" viewBox="0 0 14 14"><rect x="1" y="1" width="2" height="2" fill="#e3d36f"/><rect x="1" y="6" width="2" height="2" fill="#e3d36f"/><rect x="1" y="11" width="2" height="2" fill="#e3d36f"/><rect x="6" y="1" width="2" height="2" fill="#e3d36f"/><rect x="6" y="6" width="2" height="2" fill="#e3d36f"/><rect x="6" y="11" width="2" height="2" fill="#e3d36f"/><rect x="11" y="1" width="2" height="2" fill="#e3d36f"/><rect x="11" y="6" width="2" height="2" fill="#e3d36f"/><rect x="11" y="11" width="2" height="2" fill="#e3d36f"/></svg><div class="t" style="left:667px;top:762.61px;font-size:11.8px;color:#e6e6e6;">Duplicator</div><div class="a" style="left:965px;top:758px;width:20.5px;height:19px;background:#262626;border-radius:4px"></div><div class="a" style="left:965px;top:758px;width:10px;height:19px;background:none;border:1px solid #b89b3e;border-radius:3px"></div><svg class="a" style="left:968px;top:763px;" width="15" height="9" viewBox="0 0 15 9"><path d="M5 0V9L0.5 4.5Z" fill="#e3d36f"/><path d="M9.5 0V9L14 4.5Z" fill="#777"/></svg><svg class="a" style="left:990px;top:762px;" width="11" height="11" viewBox="0 0 11 11"><circle cx="5.5" cy="5.5" r="4.6" stroke="#888" fill="none" stroke-width="1.1"/></svg><div class="a" style="left:494px;top:778px;width:513px;height:22px;background:#373737;"></div><div class="a" style="left:496px;top:780px;width:17px;height:19px;background:#262626;border-radius:3px"></div><div class="a" style="left:515px;top:780px;width:18px;height:19px;background:#262626;border-radius:3px"></div><div class="a" style="left:534px;top:780px;width:18px;height:19px;background:#262626;border-radius:3px"></div><div class="a" style="left:573px;top:781px;width:16px;height:16px;background:#fde27a;border-radius:3px;box-shadow:0 0 0 1px #1d1d1d"></div><svg class="a" style="left:593px;top:784px;" width="14" height="10" viewBox="0 0 14 10"><path d="M4 0.5H14V9.5H4L0.5 5Z" fill="#c8c8c8"/><circle cx="5" cy="5" r="1.6" fill="#333"/></svg><svg class="a" style="left:649px;top:782px;" width="14" height="14" viewBox="0 0 14 14"><rect x="1" y="1" width="12" height="12" fill="none" stroke="#e3d36f" stroke-width="1.3" stroke-dasharray="3 2"/></svg><div class="t" style="left:667px;top:784.61px;font-size:11.8px;color:#9a9a9a;">Basic Shape</div><svg class="a" style="left:990px;top:784px;" width="11" height="11" viewBox="0 0 11 11"><circle cx="5.5" cy="5.5" r="4.6" stroke="#888" fill="none" stroke-width="1.1"/></svg><div class="a" style="left:494px;top:800px;width:513px;height:22px;background:#373737;"></div><div class="a" style="left:496px;top:802px;width:17px;height:19px;background:#262626;border-radius:3px"></div><div class="a" style="left:515px;top:802px;width:18px;height:19px;background:#262626;border-radius:3px"></div><div class="a" style="left:534px;top:802px;width:18px;height:19px;background:#262626;border-radius:3px"></div><div class="a" style="left:573px;top:803px;width:16px;height:16px;background:#fde27a;border-radius:3px;box-shadow:0 0 0 1px #1d1d1d"></div><svg class="a" style="left:593px;top:806px;" width="14" height="10" viewBox="0 0 14 10"><path d="M4 0.5H14V9.5H4L0.5 5Z" fill="#c8c8c8"/><circle cx="5" cy="5" r="1.6" fill="#333"/></svg><div class="a" style="left:610px;top:802px;width:32px;height:19px;background:#262626;border-radius:3px"></div><svg class="a" style="left:614px;top:808px;" width="9" height="6" viewBox="0 0 9 6"><path d="M0.5 0.5L4.5 4.5L8.5 0.5" stroke="#888" fill="none"/></svg><svg class="a" style="left:649px;top:804px;" width="14" height="14" viewBox="0 0 14 14"><rect x="0.7" y="0.7" width="12.6" height="12.6" fill="none" stroke="#e3d36f" stroke-width="1.3"/><rect x="2.7" y="2.7" width="8.6" height="8.6" fill="#2a2a2a" stroke="#ccc" stroke-width="0.8"/><path d="M3.5 10L5.5 6.5L7 8.5L8.5 7L10.5 10Z" fill="#ccc"/><circle cx="9" cy="4.8" r="0.9" fill="#ccc"/></svg><div class="t" style="left:667px;top:806.61px;font-size:11.8px;color:#9a9a9a;">profile</div><div class="a" style="left:965px;top:802px;width:20.5px;height:19px;background:#262626;border-radius:4px"></div><svg class="a" style="left:968px;top:807px;" width="15" height="9" viewBox="0 0 15 9"><path d="M5 0V9L0.5 4.5Z" fill="#e3d36f"/><path d="M9.5 0V9L14 4.5Z" fill="#d64de8"/></svg><svg class="a" style="left:990px;top:806px;" width="11" height="11" viewBox="0 0 11 11"><circle cx="5.5" cy="5.5" r="4.6" stroke="#888" fill="none" stroke-width="1.1"/></svg><div class="a" style="left:494px;top:822px;width:513px;height:22px;background:#373737;"></div><div class="a" style="left:496px;top:824px;width:17px;height:19px;background:#262626;border-radius:3px"></div><div class="a" style="left:515px;top:824px;width:18px;height:19px;background:#262626;border-radius:3px"></div><svg class="a" style="left:518px;top:827px;" width="12" height="12" viewBox="0 0 12 12"><circle cx="6" cy="6.3" r="4.8" stroke="#ccc" fill="none" stroke-width="1.1"/><path d="M3.5 6L6 8.4L11 2.5" stroke="#ccc" stroke-width="1.5" fill="none"/></svg><div class="a" style="left:573px;top:825px;width:16px;height:16px;background:#ff86b0;border-radius:3px;box-shadow:0 0 0 1px #1d1d1d"></div><svg class="a" style="left:593px;top:828px;" width="14" height="10" viewBox="0 0 14 10"><path d="M4 0.5H14V9.5H4L0.5 5Z" fill="#c8c8c8"/><circle cx="5" cy="5" r="1.6" fill="#333"/></svg><svg class="a" style="left:668px;top:824px;" width="17" height="17" viewBox="0 0 17 17"><rect x="0.7" y="4.7" width="12" height="11.5" fill="none" stroke="#ff86b0" stroke-width="1.3"/><path d="M2.5 14L5.5 9.5L7.5 12L9 10.5L11 14Z" fill="#ff86b0"/><circle cx="12.5" cy="4.5" r="3.8" fill="#ddd"/></svg><div class="t" style="left:687px;top:828.61px;font-size:11.8px;color:#e6e6e6;">profile Image Shader</div><div class="a" style="left:965px;top:824px;width:20.5px;height:19px;background:#262626;border-radius:4px"></div><svg class="a" style="left:968px;top:829px;" width="15" height="9" viewBox="0 0 15 9"><path d="M5 0V9L0.5 4.5Z" fill="#e3d36f"/><path d="M9.5 0V9L14 4.5Z" fill="#d64de8"/></svg><svg class="a" style="left:990px;top:828px;" width="11" height="11" viewBox="0 0 11 11"><circle cx="5.5" cy="5.5" r="4.6" stroke="#888" fill="none" stroke-width="1.1"/></svg><div class="a" style="left:494px;top:844px;width:513px;height:22px;background:#373737;"></div><div class="a" style="left:496px;top:846px;width:17px;height:19px;background:#262626;border-radius:3px"></div><div class="a" style="left:515px;top:846px;width:18px;height:19px;background:#262626;border-radius:3px"></div><div class="a" style="left:534px;top:846px;width:18px;height:19px;background:#262626;border-radius:3px"></div><svg class="a" style="left:517px;top:851px;" width="14" height="10" viewBox="0 0 14 10"><path d="M0.5 5Q7 -2.5 13.5 5Q7 12.5 0.5 5Z" fill="none" stroke="#c8c8c8"/><circle cx="7" cy="5" r="2.2" fill="#c8c8c8"/></svg><div class="a" style="left:573px;top:847px;width:16px;height:16px;background:#fde27a;border-radius:3px;box-shadow:0 0 0 1px #1d1d1d"></div><svg class="a" style="left:593px;top:850px;" width="14" height="10" viewBox="0 0 14 10"><path d="M4 0.5H14V9.5H4L0.5 5Z" fill="#c8c8c8"/><circle cx="5" cy="5" r="1.6" fill="#333"/></svg><svg class="a" style="left:649px;top:848px;" width="14" height="14" viewBox="0 0 14 14"><rect x="0.7" y="0.7" width="12.6" height="12.6" fill="none" stroke="#e3d36f" stroke-width="1.3"/><rect x="2.8" y="2.8" width="8.4" height="8.4" fill="#ccc"/></svg><div class="t" style="left:667px;top:850.61px;font-size:11.8px;color:#e6e6e6;">Background Shape</div><svg class="a" style="left:990px;top:850px;" width="11" height="11" viewBox="0 0 11 11"><circle cx="5.5" cy="5.5" r="4.6" stroke="#888" fill="none" stroke-width="1.1"/></svg><div class="a" style="left:736px;top:866px;width:0px;height:0px;background:none;"></div><div class="a" style="left:633px;top:732px;width:183px;height:26.5px;background:none;border:2.8px solid #b6e82c"></div><div class="a" style="left:1017px;top:712px;width:2px;height:250px;background:#2a2a2a;"></div><div class="a" style="left:1020px;top:826px;width:1.2px;height:2px;background:#777;"></div><div class="a" style="left:1020px;top:830px;width:1.2px;height:2px;background:#777;"></div><div class="a" style="left:1020px;top:834px;width:1.2px;height:2px;background:#777;"></div><div class="a" style="left:1020px;top:838px;width:1.2px;height:2px;background:#777;"></div><div class="a" style="left:1019px;top:670px;width:894px;height:292px;background:#262626;"></div><div class="a" style="left:1023px;top:670px;width:890px;height:24px;background:#222222;"></div><div class="a" style="left:1019px;top:670px;width:7px;height:292px;background:#1c1c1c;"></div><div class="a" style="left:1026px;top:711px;width:8px;height:251px;background:#1f1f1f;"></div><div class="a" style="left:1021px;top:826px;width:1.2px;height:2px;background:#888;"></div><div class="a" style="left:1021px;top:830px;width:1.2px;height:2px;background:#888;"></div><div class="a" style="left:1021px;top:834px;width:1.2px;height:2px;background:#888;"></div><div class="a" style="left:1021px;top:838px;width:1.2px;height:2px;background:#888;"></div><svg class="a" style="left:0px;top:0px;" width="1920" height="1030" viewBox="0 0 1920 1030"><rect x="1033.20" y="686" width="1" height="8" fill="#9a9a9a"/><rect x="1043.66" y="690" width="1" height="4" fill="#8a8a8a"/><rect x="1054.12" y="690" width="1" height="4" fill="#8a8a8a"/><rect x="1064.58" y="690" width="1" height="4" fill="#8a8a8a"/><rect x="1075.04" y="690" width="1" height="4" fill="#8a8a8a"/><rect x="1085.51" y="686" width="1" height="8" fill="#9a9a9a"/><rect x="1095.97" y="690" width="1" height="4" fill="#8a8a8a"/><rect x="1106.43" y="690" width="1" height="4" fill="#8a8a8a"/><rect x="1116.89" y="690" width="1" height="4" fill="#8a8a8a"/><rect x="1127.35" y="690" width="1" height="4" fill="#8a8a8a"/><rect x="1137.81" y="686" width="1" height="8" fill="#9a9a9a"/><rect x="1148.27" y="690" width="1" height="4" fill="#8a8a8a"/><rect x="1158.73" y="690" width="1" height="4" fill="#8a8a8a"/><rect x="1169.19" y="690" width="1" height="4" fill="#8a8a8a"/><rect x="1179.65" y="690" width="1" height="4" fill="#8a8a8a"/><rect x="1190.12" y="686" width="1" height="8" fill="#9a9a9a"/><rect x="1200.58" y="690" width="1" height="4" fill="#8a8a8a"/><rect x="1211.04" y="690" width="1" height="4" fill="#8a8a8a"/><rect x="1221.50" y="690" width="1" height="4" fill="#8a8a8a"/><rect x="1231.96" y="690" width="1" height="4" fill="#8a8a8a"/><rect x="1242.42" y="686" width="1" height="8" fill="#9a9a9a"/><rect x="1252.88" y="690" width="1" height="4" fill="#8a8a8a"/><rect x="1263.34" y="690" width="1" height="4" fill="#8a8a8a"/><rect x="1273.80" y="690" width="1" height="4" fill="#8a8a8a"/><rect x="1284.26" y="690" width="1" height="4" fill="#8a8a8a"/><rect x="1294.73" y="686" width="1" height="8" fill="#9a9a9a"/><rect x="1305.19" y="690" width="1" height="4" fill="#8a8a8a"/><rect x="1315.65" y="690" width="1" height="4" fill="#8a8a8a"/><rect x="1326.11" y="690" width="1" height="4" fill="#8a8a8a"/><rect x="1336.57" y="690" width="1" height="4" fill="#8a8a8a"/><rect x="1347.03" y="686" width="1" height="8" fill="#9a9a9a"/><rect x="1357.49" y="690" width="1" height="4" fill="#8a8a8a"/><rect x="1367.95" y="690" width="1" height="4" fill="#8a8a8a"/><rect x="1378.41" y="690" width="1" height="4" fill="#8a8a8a"/><rect x="1388.87" y="690" width="1" height="4" fill="#8a8a8a"/><rect x="1399.34" y="686" width="1" height="8" fill="#9a9a9a"/><rect x="1409.80" y="690" width="1" height="4" fill="#8a8a8a"/><rect x="1420.26" y="690" width="1" height="4" fill="#8a8a8a"/><rect x="1430.72" y="690" width="1" height="4" fill="#8a8a8a"/><rect x="1441.18" y="690" width="1" height="4" fill="#8a8a8a"/><rect x="1451.64" y="686" width="1" height="8" fill="#9a9a9a"/><rect x="1462.10" y="690" width="1" height="4" fill="#8a8a8a"/><rect x="1472.56" y="690" width="1" height="4" fill="#8a8a8a"/><rect x="1483.02" y="690" width="1" height="4" fill="#8a8a8a"/><rect x="1493.48" y="690" width="1" height="4" fill="#8a8a8a"/><rect x="1503.95" y="686" width="1" height="8" fill="#9a9a9a"/><rect x="1514.41" y="690" width="1" height="4" fill="#8a8a8a"/><rect x="1524.87" y="690" width="1" height="4" fill="#8a8a8a"/><rect x="1535.33" y="690" width="1" height="4" fill="#8a8a8a"/><rect x="1545.79" y="690" width="1" height="4" fill="#8a8a8a"/><rect x="1556.25" y="686" width="1" height="8" fill="#9a9a9a"/><rect x="1566.71" y="690" width="1" height="4" fill="#8a8a8a"/><rect x="1577.17" y="690" width="1" height="4" fill="#8a8a8a"/><rect x="1587.63" y="690" width="1" height="4" fill="#8a8a8a"/><rect x="1598.09" y="690" width="1" height="4" fill="#8a8a8a"/><rect x="1608.56" y="686" width="1" height="8" fill="#9a9a9a"/><rect x="1619.02" y="690" width="1" height="4" fill="#8a8a8a"/><rect x="1629.48" y="690" width="1" height="4" fill="#8a8a8a"/><rect x="1639.94" y="690" width="1" height="4" fill="#8a8a8a"/><rect x="1650.40" y="690" width="1" height="4" fill="#8a8a8a"/><rect x="1660.86" y="686" width="1" height="8" fill="#9a9a9a"/><rect x="1671.32" y="690" width="1" height="4" fill="#8a8a8a"/><rect x="1681.78" y="690" width="1" height="4" fill="#8a8a8a"/><rect x="1692.24" y="690" width="1" height="4" fill="#8a8a8a"/><rect x="1702.70" y="690" width="1" height="4" fill="#8a8a8a"/><rect x="1713.16" y="686" width="1" height="8" fill="#9a9a9a"/><rect x="1723.63" y="690" width="1" height="4" fill="#8a8a8a"/><rect x="1734.09" y="690" width="1" height="4" fill="#8a8a8a"/><rect x="1744.55" y="690" width="1" height="4" fill="#8a8a8a"/><rect x="1755.01" y="690" width="1" height="4" fill="#8a8a8a"/><rect x="1765.47" y="686" width="1" height="8" fill="#9a9a9a"/><rect x="1775.93" y="690" width="1" height="4" fill="#8a8a8a"/><rect x="1786.39" y="690" width="1" height="4" fill="#8a8a8a"/><rect x="1796.85" y="690" width="1" height="4" fill="#8a8a8a"/><rect x="1807.31" y="690" width="1" height="4" fill="#8a8a8a"/><rect x="1817.78" y="686" width="1" height="8" fill="#9a9a9a"/><rect x="1828.24" y="690" width="1" height="4" fill="#8a8a8a"/><rect x="1838.70" y="690" width="1" height="4" fill="#8a8a8a"/><rect x="1849.16" y="690" width="1" height="4" fill="#8a8a8a"/><rect x="1859.62" y="690" width="1" height="4" fill="#8a8a8a"/><rect x="1870.08" y="686" width="1" height="8" fill="#9a9a9a"/><rect x="1880.54" y="690" width="1" height="4" fill="#8a8a8a"/><rect x="1891.00" y="690" width="1" height="4" fill="#8a8a8a"/><rect x="1901.46" y="690" width="1" height="4" fill="#8a8a8a"/></svg><div class="t" style="left:1002.50px;top:673.00px;width:60px;text-align:center;font-size:11.5px;color:#dedede">0</div><div class="t" style="left:1054.81px;top:673.00px;width:60px;text-align:center;font-size:11.5px;color:#dedede">15</div><div class="t" style="left:1107.11px;top:673.00px;width:60px;text-align:center;font-size:11.5px;color:#dedede">30</div><div class="t" style="left:1159.41px;top:673.00px;width:60px;text-align:center;font-size:11.5px;color:#dedede">45</div><div class="t" style="left:1211.72px;top:673.00px;width:60px;text-align:center;font-size:11.5px;color:#dedede">60</div><div class="t" style="left:1264.03px;top:673.00px;width:60px;text-align:center;font-size:11.5px;color:#dedede">75</div><div class="t" style="left:1316.33px;top:673.00px;width:60px;text-align:center;font-size:11.5px;color:#dedede">90</div><div class="t" style="left:1368.63px;top:673.00px;width:60px;text-align:center;font-size:11.5px;color:#dedede">105</div><div class="t" style="left:1420.94px;top:673.00px;width:60px;text-align:center;font-size:11.5px;color:#dedede">120</div><div class="t" style="left:1473.25px;top:673.00px;width:60px;text-align:center;font-size:11.5px;color:#dedede">135</div><div class="t" style="left:1525.55px;top:673.00px;width:60px;text-align:center;font-size:11.5px;color:#dedede">150</div><div class="t" style="left:1577.86px;top:673.00px;width:60px;text-align:center;font-size:11.5px;color:#dedede">165</div><div class="t" style="left:1630.16px;top:673.00px;width:60px;text-align:center;font-size:11.5px;color:#dedede">180</div><div class="t" style="left:1682.46px;top:673.00px;width:60px;text-align:center;font-size:11.5px;color:#dedede">195</div><div class="t" style="left:1734.77px;top:673.00px;width:60px;text-align:center;font-size:11.5px;color:#dedede">210</div><div class="t" style="left:1787.08px;top:673.00px;width:60px;text-align:center;font-size:11.5px;color:#dedede">225</div><div class="t" style="left:1839.38px;top:673.00px;width:60px;text-align:center;font-size:11.5px;color:#dedede">240</div><div class="a" style="left:1034px;top:694px;width:871px;height:16.5px;background:#454545;"></div><div class="a" style="left:1029px;top:693px;width:5px;height:18px;background:#78cbb0;border-radius:1.5px"></div><div class="a" style="left:1905px;top:693px;width:5px;height:18px;background:#78cbb0;border-radius:1.5px"></div><svg class="a" style="left:1027px;top:683px;" width="15" height="11" viewBox="0 0 15 11"><path d="M0 0H15L7.5 10.5Z" fill="#6cc3a6"/></svg><div class="a" style="left:1029px;top:694px;width:5px;height:17px;background:#6cc3a6;"></div><div class="a" style="left:1033px;top:711px;width:1.3px;height:251px;background:#5a9f8a;"></div><div class="a" style="left:1034.5px;top:714px;width:870.5px;height:18px;background:repeating-linear-gradient(-45deg,#5a84d6 0px,#5a84d6 8.3px,#70a0f2 8.8px,#70a0f2 11.8px,#5a84d6 12.5px);border-radius:2px"></div><div class="t" style="left:1042px;top:717.61px;font-size:11.8px;color:#fff;">Group Array</div><div class="a" style="left:1034.5px;top:736px;width:870.5px;height:18px;background:radial-gradient(circle,#a0c95c 0.7px,transparent 1.05px) 0 0/3px 3px,repeating-linear-gradient(-45deg,#d0ee8a 0px,#d0ee8a 8.3px,#e6f7b2 8.8px,#e6f7b2 11.8px,#d0ee8a 12.5px);border-radius:2px;border-top:1px solid #fafafa;border-bottom:1px solid #fafafa"></div><div class="t" style="left:1042px;top:739.61px;font-size:11.8px;color:#2a2a2a;">Value [Shape Scale]</div><div class="a" style="left:1034.5px;top:758px;width:870.5px;height:18px;background:#fde47a;border-radius:2px"></div><div class="t" style="left:1042px;top:761.61px;font-size:11.8px;color:#222;">Duplicator</div><div class="a" style="left:1034.5px;top:780px;width:870.5px;height:18px;background:#fde47a;border-radius:2px"></div><div class="t" style="left:1042px;top:783.61px;font-size:11.8px;color:#222;">Basic Shape</div><div class="a" style="left:1034.5px;top:802px;width:870.5px;height:18px;background:#fde47a;border-radius:2px"></div><div class="t" style="left:1042px;top:805.61px;font-size:11.8px;color:#222;">profile</div><div class="a" style="left:1034.5px;top:824px;width:870.5px;height:18px;background:#ff88b2;border-radius:2px"></div><div class="t" style="left:1042px;top:827.61px;font-size:11.8px;color:#fff;">profile Image Shader</div><div class="a" style="left:1034.5px;top:846px;width:870.5px;height:18px;background:#fde47a;border-radius:2px"></div><div class="t" style="left:1042px;top:849.61px;font-size:11.8px;color:#222;">Background Shape</div><div class="a" style="left:494px;top:962px;width:525px;height:14px;background:#2a2a2a;"></div><div class="a" style="left:495px;top:964px;width:509px;height:10px;background:#4a4a4a;border-radius:5px"></div><div class="a" style="left:1019px;top:962px;width:895px;height:14px;background:#2a2a2a;"></div><div class="a" style="left:1027px;top:964px;width:878px;height:10px;background:#4a4a4a;border-radius:5px"></div><div class="a" style="left:494px;top:976px;width:525px;height:22px;background:#454545;"></div><div class="a" style="left:1019px;top:962px;width:7px;height:36px;background:#1c1c1c;"></div><div class="a" style="left:1026px;top:976px;width:888px;height:22px;background:#454545;"></div><div class="a" style="left:497px;top:977.5px;width:19.5px;height:19.5px;background:#2c2c2c;border-radius:5px;border:1px solid #232323"></div><svg class="a" style="left:500px;top:982px;" width="14" height="10" viewBox="0 0 14 10"><path d="M4 0.5H14V9.5H4L0.5 5Z" fill="#c8c8c8"/><circle cx="5" cy="5" r="1.6" fill="#333"/></svg><div class="t" style="left:520.5px;top:982.61px;font-size:11.8px;color:#e6e6e6;">1 selected</div><div class="a" style="left:810.5px;top:978px;width:19px;height:19px;background:#2c2c2c;border-radius:4px;border:1px solid #232323"></div><svg class="a" style="left:814px;top:981.5px;" width="12" height="12" viewBox="0 0 12 12"><rect x="0.7" y="0.7" width="10.6" height="10.6" fill="none" stroke="#ccc" stroke-width="1.2"/><rect x="4.5" y="4.5" width="3" height="3" fill="#ccc"/></svg><div class="a" style="left:833px;top:977.5px;width:184px;height:20px;background:#555;border-radius:3px"></div><div class="a" style="left:834px;top:978.5px;width:86px;height:18px;background:#262626;border-radius:3px"></div><svg class="a" style="left:840px;top:981px;" width="13" height="12" viewBox="0 0 13 12"><path d="M0 1.5H8M2.5 6H13M0 10.5H8" stroke="#2ecc71" stroke-width="1.8"/></svg><div class="t" style="left:856.5px;top:982.61px;font-size:11.8px;color:#f0f0f0;">Time Editor</div><svg class="a" style="left:928px;top:981px;" width="13" height="13" viewBox="0 0 13 13"><path d="M1 0V12H13" stroke="#bbb" stroke-width="1" fill="none"/><path d="M2 11L12 2" stroke="#bbb" stroke-width="1"/><path d="M4 11A6 6 0 0 0 3 6" stroke="#bbb" fill="none"/></svg><div class="t" style="left:944.8px;top:982.61px;font-size:11.8px;color:#e6e6e6;">Graph Editor</div><div class="a" style="left:1030px;top:978px;width:19px;height:19px;background:#2c2c2c;border-radius:4px;border:1px solid #232323"></div><svg class="a" style="left:1033px;top:981px;" width="13" height="13" viewBox="0 0 13 13"><path d="M0 1H13M0 4.5H13M0 8H5M7 8H13" stroke="#ccc" stroke-width="1.2"/><path d="M11 13h2v-2z" fill="#5cc9a7"/></svg><div class="a" style="left:1049px;top:978.5px;width:150px;height:18px;background:#2b2b2b;border-radius:3px"></div><div class="t" style="left:1052px;top:982.61px;font-size:11.8px;color:#e6e6e6;">Default Keyframe Layer</div><div class="a" style="left:1205.6px;top:978.5px;width:70.4px;height:18px;background:#2b2b2b;border-radius:3px"></div><div class="t" style="left:1211px;top:982.61px;font-size:11.8px;color:#555;">F</div><div class="t" style="left:1224px;top:982.61px;font-size:11.8px;color:#ccc;">-</div><div class="t" style="left:1281.7px;top:982.61px;font-size:11.8px;color:#e6e6e6;">Align:</div><div class="a" style="left:1318px;top:977.5px;width:52.6px;height:20px;background:#262626;border-radius:4px;border:1px solid #222"></div><div class="a" style="left:1335.5px;top:978px;width:1px;height:19px;background:#444;"></div><div class="a" style="left:1353.0px;top:978px;width:1px;height:19px;background:#444;"></div><svg class="a" style="left:1322px;top:981px;" width="45" height="12" viewBox="0 0 45 12"><g stroke="#ddd" fill="none"><path d="M1 0V12M3 3H6M8 3H10M3 8H7M9 8H11" stroke-width="1.2"/><path d="M23 0V12M19 3H22M24 3H27M18 8H28" stroke-width="1.2" stroke-dasharray="2 1"/><path d="M43 0V12M34 3H36M38 3H41M33 8H41" stroke-width="1.2"/></g></svg><div class="a" style="left:1375px;top:977.5px;width:18px;height:20px;background:#2c2c2c;border-radius:4px;border:1px solid #232323"></div><svg class="a" style="left:1378px;top:981px;" width="12" height="12" viewBox="0 0 12 12"><rect x="0.7" y="0.7" width="10.6" height="10.6" fill="none" stroke="#ccc" stroke-dasharray="2 1.5" stroke-width="1.1"/><rect x="4.5" y="4.5" width="3" height="3" fill="#ccc"/></svg><div class="a" style="left:1395.7px;top:977.5px;width:31px;height:20px;background:#2c2c2c;border-radius:4px;border:1px solid #232323"></div><svg class="a" style="left:1399px;top:980.5px;" width="13" height="13" viewBox="0 0 13 13"><path d="M2 11A5 5 0 0 1 11 5" stroke="#ddd" stroke-width="2.4" fill="none"/><rect x="1" y="10" width="3" height="2.5" fill="#ddd"/><rect x="10" y="3" width="2.5" height="3" fill="#ddd"/></svg><svg class="a" style="left:1417px;top:983.5px;" width="6" height="8" viewBox="0 0 6 8"><path d="M0.5 0.5L5 4L0.5 7.5Z" fill="none" stroke="#999" stroke-width="0.9"/></svg><div class="a" style="left:1431px;top:977.5px;width:31.5px;height:20px;background:#2c2c2c;border-radius:4px;border:1px solid #232323"></div><svg class="a" style="left:1434px;top:981px;" width="15" height="12" viewBox="0 0 15 12"><path d="M0 6H15M5 2V10M7.5 0V12M10 3V9" stroke="#ddd" stroke-width="1.1"/></svg><svg class="a" style="left:1453px;top:983.5px;" width="6" height="8" viewBox="0 0 6 8"><path d="M0.5 0.5L5 4L0.5 7.5Z" fill="none" stroke="#999" stroke-width="0.9"/></svg><svg class="a" style="left:1743px;top:980px;" width="15" height="15" viewBox="0 0 15 15"><circle cx="6.5" cy="6.5" r="5.5" fill="none" stroke="#ccc" stroke-width="1.2"/><path d="M4 6.5H9" stroke="#ccc" stroke-width="1.2"/><path d="M10.5 10.5L13.5 13.5" stroke="#ccc" stroke-width="2"/></svg><div class="a" style="left:1770px;top:986px;width:112px;height:2.5px;background:#333;border-radius:2px"></div><div class="a" style="left:1761.5px;top:981.5px;width:11px;height:11px;border-radius:50%;background:#6cc3a6"></div><div class="a" style="left:1765px;top:985px;width:4px;height:4px;background:#4b8c76;border-radius:50%"></div><svg class="a" style="left:1886.5px;top:980px;" width="15" height="15" viewBox="0 0 15 15"><circle cx="6.5" cy="6.5" r="5.5" fill="none" stroke="#ccc" stroke-width="1.2"/><path d="M4 6.5H9M6.5 4V9" stroke="#ccc" stroke-width="1.2"/><path d="M10.5 10.5L13.5 13.5" stroke="#ccc" stroke-width="2"/></svg><div class="a" style="left:488px;top:998px;width:1432px;height:6px;background:#151515;"></div><div class="a" style="left:494px;top:1004px;width:1420px;height:22px;background:#3c3c3c;"></div><div class="a" style="left:488px;top:1026px;width:1432px;height:4px;background:#1e1e1e;"></div><div class="a" style="left:498px;top:1010px;width:2px;height:2px;background:#777;"></div><div class="a" style="left:498px;top:1014px;width:2px;height:2px;background:#777;"></div><div class="a" style="left:498px;top:1018px;width:2px;height:2px;background:#777;"></div><div class="a" style="left:507.5px;top:1006px;width:17px;height:19px;background:#2c2c2c;border-radius:4px;border:1px solid #232323"></div><svg class="a" style="left:509px;top:1008px;" width="14" height="14" viewBox="0 0 14 14"><path d="M1 1H13V10H9L12 13L6 10H1Z" fill="#ddd"/><path d="M3 3.5H4M5 3.5H11M3 6H4M5 6H11M3 8.3H4M5 8.3H11" stroke="#333" stroke-width="1"/><path d="M12 14h2v-2z" fill="#5cc9a7"/></svg><div class="a" style="left:528px;top:1008px;width:18px;height:14px;background:#2ecc71;border-radius:2px"></div><div class="t" style="left:529.5px;top:1010.29px;font-size:11px;color:#111;">9+</div><div class="a" style="left:554px;top:1012px;width:6.5px;height:6.5px;border-radius:50%;background:#2ecc71"></div><div class="t" style="left:565px;top:1010.61px;font-size:11.8px;color:#e6e6e6;">Saved scene to: D:/DATA/AI Creator/Cavalry/images-in-duplicators.cv.</div><div class="t" style="left:1349px;top:1010.11px;font-size:11.8px;color:#e6e6e6;font-style:italic;letter-spacing:-0.64px">Click to see next message</div><div class="a" style="left:1476.7px;top:1006.4px;width:79.5px;height:17.2px;background:#e1c56b;border-radius:1px"></div><div class="t" style="left:1482.2px;top:1010.61px;font-size:11.8px;color:#222;">Feedback</div><div class="a" style="left:1560px;top:1006.4px;width:108.7px;height:17.2px;background:#2ecc71;border-radius:1px"></div><div class="t" style="left:1565.5px;top:1010.61px;font-size:11.8px;color:#111;">Upgrade to Pro</div><div class="a" style="left:1672.4px;top:1006.4px;width:129.4px;height:17.2px;background:#c48cf4;border-radius:1px"></div><div class="t" style="left:1677.9px;top:1010.61px;font-size:11.8px;color:#222;">New Beta Available</div><div class="a" style="left:1804.8px;top:1006.4px;width:105.7px;height:17.2px;background:#3aa6ef;border-radius:1px"></div><div class="t" style="left:1810.3px;top:1010.61px;font-size:11.8px;color:#111;">Tips and Tricks</div><svg class="a" style="left:1538px;top:1009px;" width="12" height="12" viewBox="0 0 12 12"><rect x="1" y="1" width="8" height="10" fill="#f4f4f4"/><path d="M4 9L10 2L11.5 3.5L5.5 10Z" fill="#e06060"/></svg><svg class="a" style="left:1648px;top:1010px;" width="14" height="10" viewBox="0 0 14 10"><ellipse cx="4" cy="6" rx="3.5" ry="3.5" fill="#f2b531"/><ellipse cx="10" cy="6" rx="3.5" ry="3.5" fill="#f2b531"/></svg><svg class="a" style="left:1782px;top:1008px;" width="13" height="13" viewBox="0 0 13 13"><circle cx="6.5" cy="6.5" r="5.5" fill="#f5b942"/><path d="M2 3L5 5M11 3L8 5" stroke="#e44" stroke-width="1.3"/></svg><svg class="a" style="left:1892px;top:1008px;" width="13" height="13" viewBox="0 0 13 13"><path d="M12 1L8 2L3 7L6 10L11 5Z" fill="#eee"/><circle cx="8.3" cy="4.8" r="1.2" fill="#3a8fd8"/><path d="M3 7L1 12L6 10" fill="#e55"/></svg>
<div class="a" style="left:233px;top:578px;width:238px;height:208px;background:#272727;box-shadow:-2px 3px 4px rgba(0,0,0,0.45)"></div><div class="t" style="left:255px;top:584.11px;font-size:11.8px;color:#7a7a7a;">Reset Attribute Value to Default</div><div class="a" style="left:233px;top:601px;width:238px;height:1.2px;background:#3c3c3c;"></div><div class="t" style="left:255px;top:608.11px;font-size:11.8px;color:#7a7a7a;">Rename...</div><div class="a" style="left:233px;top:623px;width:238px;height:29px;background:#262626;"></div><svg class="a" style="left:237px;top:632px;" width="10" height="10" viewBox="0 0 10 10"><path d="M5 0V10M0 5H10" stroke="#e6e6e6" stroke-width="1.6"/></svg><div class="t" style="left:255px;top:632.61px;font-size:11.8px;color:#ececec;">Add Falloffs</div><svg class="a" style="left:456px;top:632px;" width="6" height="10" viewBox="0 0 6 10"><path d="M0.5 0.5L5 5L0.5 9.5" stroke="#aaa" fill="none"/></svg><svg class="a" style="left:237px;top:654.5px;" width="10" height="10" viewBox="0 0 10 10"><path d="M5 0V10M0 5H10" stroke="#e6e6e6" stroke-width="1.6"/></svg><div class="t" style="left:255px;top:654.61px;font-size:11.8px;color:#ececec;">Add Utility</div><svg class="a" style="left:456px;top:655px;" width="6" height="10" viewBox="0 0 6 10"><path d="M0.5 0.5L5 5L0.5 9.5" stroke="#aaa" fill="none"/></svg><div class="a" style="left:233px;top:670.5px;width:238px;height:1.2px;background:#3c3c3c;"></div><div class="t" style="left:255px;top:678.61px;font-size:11.8px;color:#7a7a7a;">Set Selected Attributes</div><div class="t" style="left:255px;top:700.61px;font-size:11.8px;color:#ececec;">Set Selected Layers</div><div class="a" style="left:233px;top:717px;width:238px;height:1.2px;background:#3c3c3c;"></div><div class="t" style="left:255px;top:724.61px;font-size:11.8px;color:#7a7a7a;">Copy Value</div><div class="a" style="left:233px;top:741px;width:238px;height:1.2px;background:#3c3c3c;"></div><div class="t" style="left:255px;top:748.11px;font-size:11.8px;color:#ececec;">Copy Layer Id</div><div class="t" style="left:255px;top:770.11px;font-size:11.8px;color:#ececec;">Copy Scripting Path</div><svg class="a" style="left:456px;top:771px;" width="6" height="10" viewBox="0 0 6 10"><path d="M0.5 0.5L5 5L0.5 9.5" stroke="#aaa" fill="none"/></svg><div class="a" style="left:470px;top:626px;width:238px;height:44px;background:#2a2a2a;box-shadow:1px 2px 3px rgba(0,0,0,0.4)"></div><div class="a" style="left:470px;top:626px;width:238px;height:22px;background:#474747;"></div><svg class="a" style="left:472px;top:630px;" width="15" height="15" viewBox="0 0 15 15"><circle cx="7.5" cy="7.5" r="6.3" fill="none" stroke="#ddd" stroke-width="1.1" stroke-dasharray="2 1.6"/><circle cx="7.5" cy="7.5" r="3.3" fill="#9fd3ff"/></svg><div class="t" style="left:492px;top:632.11px;font-size:11.8px;color:#ececec;">Falloff</div><svg class="a" style="left:472px;top:655px;" width="15" height="10" viewBox="0 0 15 10"><g fill="#9fd3ff"><rect x="0" y="8" width="1.5" height="1.5"/><rect x="3" y="5" width="1.6" height="4.5"/><rect x="6.5" y="2" width="1.6" height="7.5"/><rect x="10" y="5" width="1.6" height="4.5"/><rect x="13.5" y="8" width="1.5" height="1.5"/></g></svg><div class="t" style="left:492px;top:654.61px;font-size:11.8px;color:#ececec;">Range Falloff</div><div class="a" style="left:233px;top:623px;width:428px;height:29px;background:none;border:3px solid #b6e82c"></div>
</body></html>
